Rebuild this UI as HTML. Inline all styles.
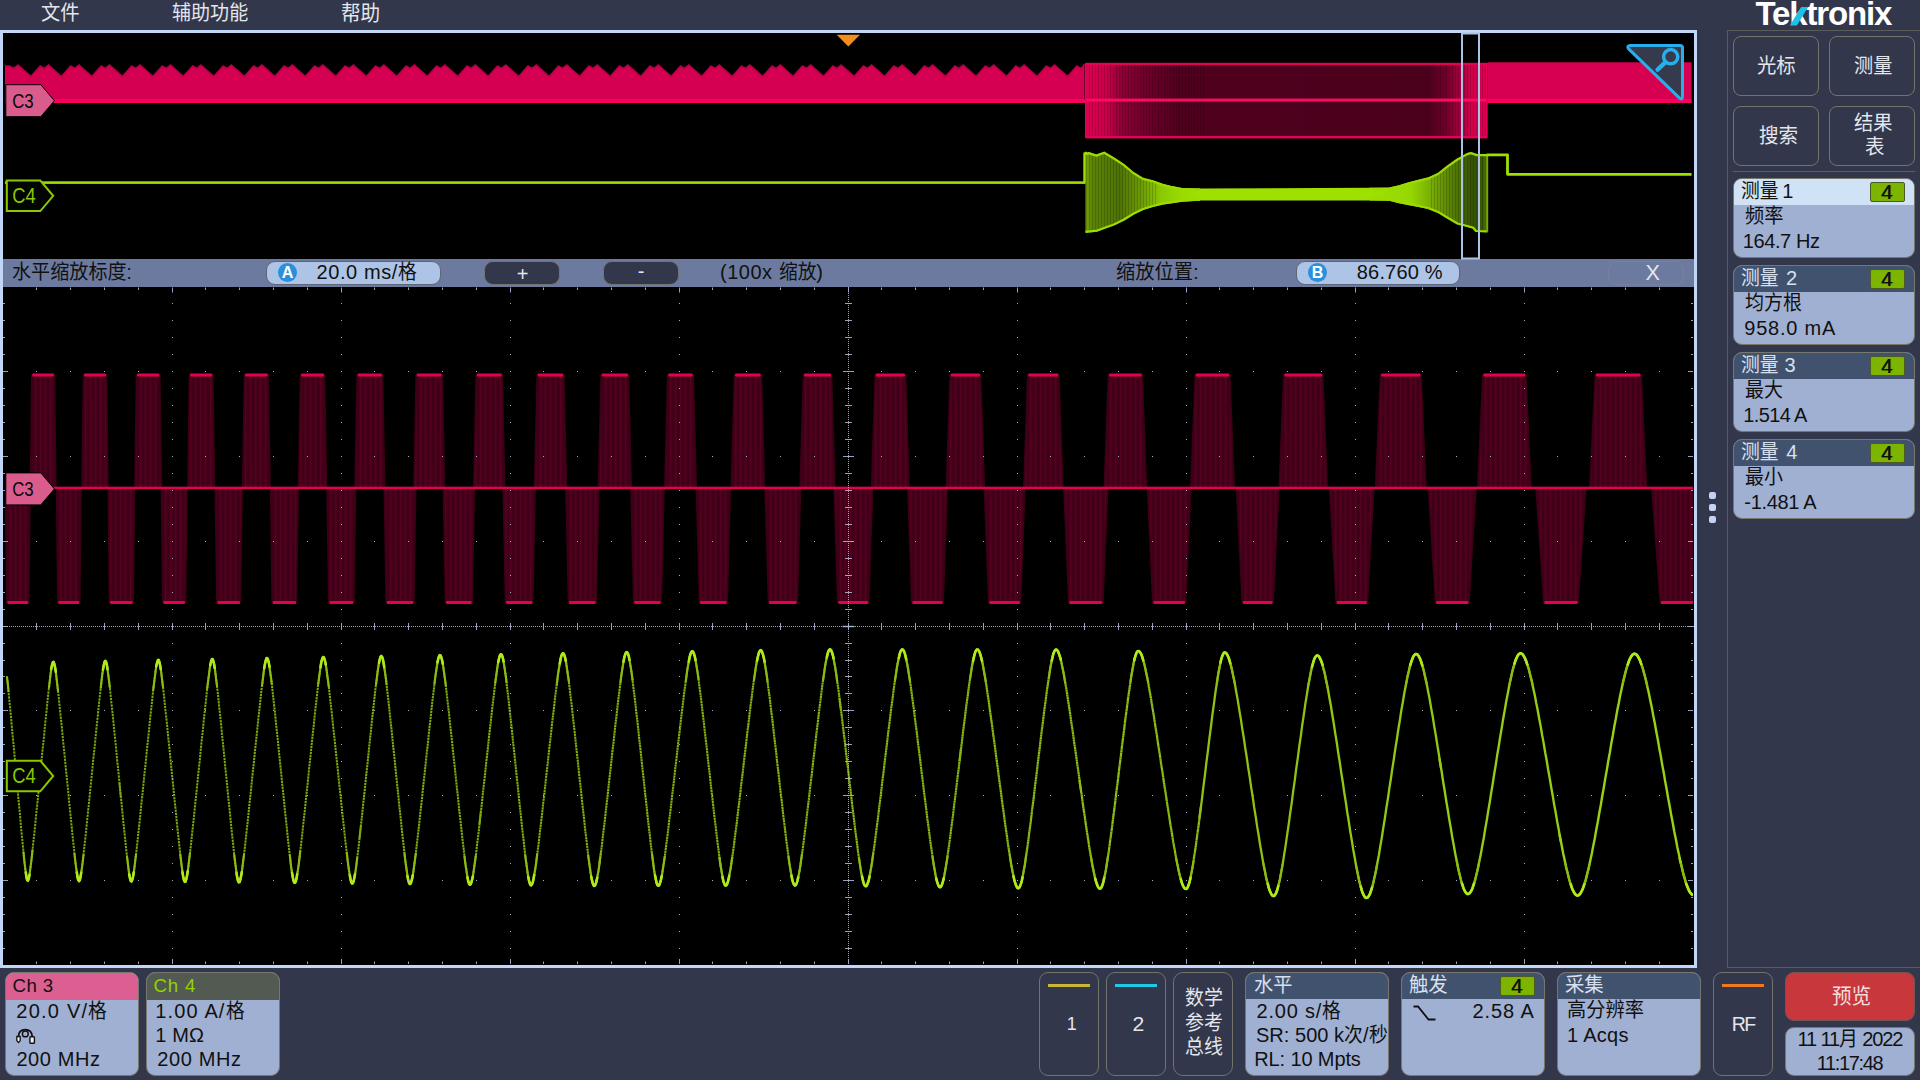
<!DOCTYPE html><html lang="zh"><head><meta charset="utf-8"><title>Tektronix</title><style>
*{box-sizing:border-box;margin:0;padding:0}
html,body{width:1920px;height:1080px;overflow:hidden;background:#32374b;}
body{position:relative;font-family:"Liberation Sans","Noto Sans CJK SC",sans-serif;font-size:20px;color:#111;}
.a{position:absolute;white-space:nowrap;}
.t{position:absolute;white-space:nowrap;line-height:24px;height:24px;}
.w{color:#e4e6ec}
.c{display:inline-block;font-size:1em;transform:scaleX(0.940);transform-origin:0 50%;letter-spacing:0;}
.btn{position:absolute;border:1px solid #73736e;border-radius:8px;background:#32374b;color:#e4e6ec;text-align:center;}
.badge{position:absolute;border:1px solid #77776e;border-radius:9px;background:#a0b0d2;overflow:hidden;}
.badge .h{position:absolute;left:0;top:0;right:0;background:#41526e;}
.chip{position:absolute;background:#7db400;border:1px solid #4c5a2a;border-radius:2px;color:#111;text-align:center;font-weight:bold;}
svg{position:absolute;left:0;top:0;}
</style></head><body>
<div class="t" style="top:1px;left:40.5px;font-size:20.56px;color:#e4e6ec;"><span class="c" style="margin-right:-0.12em">文件</span></div>
<div class="t" style="top:1px;left:171.5px;font-size:20.27px;color:#e4e6ec;"><span class="c" style="margin-right:-0.24em">辅助功能</span></div>
<div class="t" style="top:1px;left:340.5px;font-size:20.86px;color:#e4e6ec;"><span class="c" style="margin-right:-0.12em">帮助</span></div>
<div class="a" style="left:1755.5px;top:-5.2px;font-size:33px;line-height:38px;font-weight:bold;color:#fff;letter-spacing:-1.15px;">Tektronix</div>
<svg width="40" height="30" style="left:1780px;top:0" viewBox="1780 0 40 30"><polygon points="1801.2,7 1808.2,7 1796.9,25.4 1789.9,25.4" fill="#1ec0e6"/></svg>
<div class="a" style="left:0;top:30px;width:1697px;height:938px;background:#c2d6f7;"></div>
<div class="a" style="left:3px;top:33px;width:1691px;height:226px;background:#000;"></div>
<div class="a" style="left:3px;top:259px;width:1691px;height:28px;background:#6c7aa0;"></div>
<div class="a" style="left:3px;top:287px;width:1691px;height:678px;background:#000;"></div>
<svg width="1920" height="1080" viewBox="0 0 1920 1080"><polygon fill="#d60052" points="5.0,102.5 5.0,66.0 9.7,66.0 13.8,68.4 18.0,65.0 30.8,76.4 40.2,66.0 44.3,68.4 48.5,65.0 61.3,76.4 70.7,66.0 74.8,68.4 79.0,65.0 91.8,76.4 101.2,66.0 105.3,68.4 109.5,65.0 122.3,76.4 131.7,66.0 135.8,68.4 140.0,65.0 152.8,76.4 162.2,66.0 166.3,68.4 170.5,65.0 183.2,76.4 192.7,66.0 196.8,68.4 200.9,65.0 213.7,76.4 223.1,66.0 227.2,68.4 231.4,65.0 244.2,76.4 253.6,66.0 257.7,68.4 261.9,65.0 274.7,76.4 284.1,66.0 288.2,68.4 292.4,65.0 305.2,76.4 314.6,66.0 318.7,68.4 322.9,65.0 335.7,76.4 345.1,66.0 349.2,68.4 353.4,65.0 366.2,76.4 375.6,66.0 379.7,68.4 383.9,65.0 396.7,76.4 406.1,66.0 410.2,68.4 414.4,65.0 427.2,76.4 436.6,66.0 440.7,68.4 444.9,65.0 457.7,76.4 467.1,66.0 471.2,68.4 475.4,65.0 488.1,76.4 497.5,66.0 501.6,68.4 505.8,65.0 518.6,76.4 528.0,66.0 532.1,68.4 536.3,65.0 549.1,76.4 558.5,66.0 562.6,68.4 566.8,65.0 579.6,76.4 589.0,66.0 593.1,68.4 597.3,65.0 610.1,76.4 619.5,66.0 623.6,68.4 627.8,65.0 640.6,76.4 650.0,66.0 654.1,68.4 658.3,65.0 671.1,76.4 680.5,66.0 684.6,68.4 688.8,65.0 701.6,76.4 711.0,66.0 715.1,68.4 719.3,65.0 732.1,76.4 741.5,66.0 745.6,68.4 749.8,65.0 762.6,76.4 772.0,66.0 776.1,68.4 780.3,65.0 793.0,76.4 802.4,66.0 806.5,68.4 810.8,65.0 823.5,76.4 832.9,66.0 837.0,68.4 841.2,65.0 854.0,76.4 863.4,66.0 867.5,68.4 871.7,65.0 884.5,76.4 893.9,66.0 898.0,68.4 902.2,65.0 915.0,76.4 924.4,66.0 928.5,68.4 932.7,65.0 945.5,76.4 954.9,66.0 959.0,68.4 963.2,65.0 976.0,76.4 985.4,66.0 989.5,68.4 993.7,65.0 1006.5,76.4 1015.9,66.0 1020.0,68.4 1024.2,65.0 1037.0,76.4 1046.4,66.0 1050.5,68.4 1054.7,65.0 1067.5,76.4 1076.9,66.0 1081.0,68.4 1084.5,64.0 1084.5,102.5"/>
<polyline fill="none" stroke="#b40046" stroke-width="1.5" points="5.0,66.0 9.7,66.0 13.8,68.4 18.0,65.0 30.8,76.4 40.2,66.0 44.3,68.4 48.5,65.0 61.3,76.4 70.7,66.0 74.8,68.4 79.0,65.0 91.8,76.4 101.2,66.0 105.3,68.4 109.5,65.0 122.3,76.4 131.7,66.0 135.8,68.4 140.0,65.0 152.8,76.4 162.2,66.0 166.3,68.4 170.5,65.0 183.2,76.4 192.7,66.0 196.8,68.4 200.9,65.0 213.7,76.4 223.1,66.0 227.2,68.4 231.4,65.0 244.2,76.4 253.6,66.0 257.7,68.4 261.9,65.0 274.7,76.4 284.1,66.0 288.2,68.4 292.4,65.0 305.2,76.4 314.6,66.0 318.7,68.4 322.9,65.0 335.7,76.4 345.1,66.0 349.2,68.4 353.4,65.0 366.2,76.4 375.6,66.0 379.7,68.4 383.9,65.0 396.7,76.4 406.1,66.0 410.2,68.4 414.4,65.0 427.2,76.4 436.6,66.0 440.7,68.4 444.9,65.0 457.7,76.4 467.1,66.0 471.2,68.4 475.4,65.0 488.1,76.4 497.5,66.0 501.6,68.4 505.8,65.0 518.6,76.4 528.0,66.0 532.1,68.4 536.3,65.0 549.1,76.4 558.5,66.0 562.6,68.4 566.8,65.0 579.6,76.4 589.0,66.0 593.1,68.4 597.3,65.0 610.1,76.4 619.5,66.0 623.6,68.4 627.8,65.0 640.6,76.4 650.0,66.0 654.1,68.4 658.3,65.0 671.1,76.4 680.5,66.0 684.6,68.4 688.8,65.0 701.6,76.4 711.0,66.0 715.1,68.4 719.3,65.0 732.1,76.4 741.5,66.0 745.6,68.4 749.8,65.0 762.6,76.4 772.0,66.0 776.1,68.4 780.3,65.0 793.0,76.4 802.4,66.0 806.5,68.4 810.8,65.0 823.5,76.4 832.9,66.0 837.0,68.4 841.2,65.0 854.0,76.4 863.4,66.0 867.5,68.4 871.7,65.0 884.5,76.4 893.9,66.0 898.0,68.4 902.2,65.0 915.0,76.4 924.4,66.0 928.5,68.4 932.7,65.0 945.5,76.4 954.9,66.0 959.0,68.4 963.2,65.0 976.0,76.4 985.4,66.0 989.5,68.4 993.7,65.0 1006.5,76.4 1015.9,66.0 1020.0,68.4 1024.2,65.0 1037.0,76.4 1046.4,66.0 1050.5,68.4 1054.7,65.0 1067.5,76.4 1076.9,66.0 1081.0,68.4 1084.5,64.0"/>
<rect x="5" y="99" width="1080" height="4" fill="#fb005c"/>
<defs>
<linearGradient id="gb" x1="0" x2="1" y1="0" y2="0">
<stop offset="0" stop-color="#e00052"/><stop offset="0.055" stop-color="#c40048"/><stop offset="0.09" stop-color="#8c0036"/><stop offset="0.16" stop-color="#6a0028"/>
<stop offset="0.235" stop-color="#50001e"/><stop offset="0.855" stop-color="#4b001c"/><stop offset="0.90" stop-color="#72002b"/><stop offset="0.935" stop-color="#a8003e"/><stop offset="0.96" stop-color="#d0004c"/><stop offset="1" stop-color="#dc0050"/>
</linearGradient>
<linearGradient id="gg" gradientUnits="userSpaceOnUse" x1="1085" x2="1200" y1="0" y2="0">
<stop offset="0" stop-color="#7aa808"/><stop offset="0.06" stop-color="#5c8406"/><stop offset="0.3" stop-color="#4e7205"/><stop offset="0.5" stop-color="#6e9e05"/><stop offset="0.66" stop-color="#8cc804"/><stop offset="0.85" stop-color="#9bdc00"/><stop offset="1" stop-color="#9ee000"/>
</linearGradient>
<linearGradient id="gg2" gradientUnits="userSpaceOnUse" x1="1370" x2="1488" y1="0" y2="0">
<stop offset="0" stop-color="#9ee000"/><stop offset="0.34" stop-color="#96d802"/><stop offset="0.58" stop-color="#6e9e05"/><stop offset="0.74" stop-color="#4e7405"/><stop offset="0.86" stop-color="#385205"/><stop offset="0.96" stop-color="#3c5805"/><stop offset="1" stop-color="#6a9608"/>
</linearGradient>
<pattern id="stri" width="5" height="8" patternUnits="userSpaceOnUse"><rect width="5" height="8" fill="#47001a"/><rect x="0" width="1.2" height="8" fill="#560021"/><rect x="2.6" width="1" height="8" fill="#380013"/></pattern>
<pattern id="stri2" width="3" height="8" patternUnits="userSpaceOnUse"><rect x="0" width="1" height="8" fill="#000" opacity="0.16"/></pattern>
</defs>
<rect x="1086" y="64" width="401" height="73" fill="url(#gb)"/>
<rect x="1086" y="64" width="120" height="73" fill="url(#stri2)"/>
<rect x="1440" y="64" width="47" height="73" fill="url(#stri2)"/>
<rect x="1086" y="62.8" width="401" height="2.2" fill="#e80058"/>
<rect x="1086" y="136" width="401" height="2.4" fill="#e80058"/>
<rect x="1085" y="98.6" width="403" height="3" fill="#ff0a62"/>
<rect x="1085" y="63" width="1.6" height="75" fill="#e80058"/>
<rect x="1486" y="63" width="1.6" height="75" fill="#e80058"/>
<rect x="1487.5" y="62.3" width="204" height="40.5" fill="#d70050"/>
<rect x="1487.5" y="99" width="204" height="4" fill="#fb005c"/>
<rect x="5" y="181.3" width="1080" height="2.6" fill="#9ee000"/>
<polygon fill="url(#gg)" points="1085.5,153.5 1088.6,152.1 1096.4,154.6 1104.2,151.7 1113.9,157.5 1123.6,163.8 1133.3,172.0 1143.0,177.9 1152.7,180.3 1162.5,183.7 1172.2,186.2 1181.9,188.1 1200.0,188.6 1200.0,200.6 1182.0,201.7 1172.0,203.2 1162.5,204.6 1152.7,207.0 1143.0,210.0 1133.3,214.8 1123.6,220.7 1113.9,225.5 1104.0,229.0 1097.4,231.6 1085.5,232.8"/>
<polygon fill="#9ee000" points="1199.0,188.6 1371.0,187.8 1371.0,200.4 1199.0,200.6"/>
<polygon fill="url(#gg2)" points="1370.0,187.8 1389.4,187.6 1399.2,185.2 1408.9,182.3 1418.6,179.8 1428.3,177.4 1438.0,173.0 1447.7,165.3 1457.5,158.5 1467.2,153.1 1471.0,152.1 1476.9,154.1 1487.5,154.1 1487.5,232.3 1476.0,232.0 1473.0,228.6 1467.2,227.0 1457.5,224.5 1447.7,218.7 1438.0,212.9 1428.3,209.0 1418.6,207.0 1408.9,205.1 1399.2,203.2 1389.4,200.7 1370.0,200.4"/>
<rect x="1086" y="150" width="70" height="85" fill="url(#stri2)"/>
<rect x="1430" y="150" width="58" height="85" fill="url(#stri2)"/>
<polyline fill="none" stroke="#9cdc00" stroke-width="2.2" stroke-linejoin="round" points="1085.5,154.5 1088.6,153.1 1096.4,155.6 1104.2,152.7 1113.9,158.5 1123.6,164.8 1133.3,173.0 1143.0,178.9 1152.7,181.3 1162.5,184.7 1172.2,187.2 1181.9,189.1 1200.0,189.6"/>
<polyline fill="none" stroke="#9cdc00" stroke-width="2.2" stroke-linejoin="round" points="1085.5,231.8 1097.4,230.6 1104.0,228.0 1113.9,224.5 1123.6,219.7 1133.3,213.8 1143.0,209.0 1152.7,206.0 1162.5,203.6 1172.0,202.2 1182.0,200.7 1200.0,199.6"/>
<polyline fill="none" stroke="#9cdc00" stroke-width="2.2" stroke-linejoin="round" points="1370.0,188.8 1389.4,188.6 1399.2,186.2 1408.9,183.3 1418.6,180.8 1428.3,178.4 1438.0,174.0 1447.7,166.3 1457.5,159.5 1467.2,154.1 1471.0,153.1 1476.9,155.1 1487.5,155.1"/>
<polyline fill="none" stroke="#9cdc00" stroke-width="2.2" stroke-linejoin="round" points="1370.0,199.4 1389.4,199.7 1399.2,202.2 1408.9,204.1 1418.6,206.0 1428.3,208.0 1438.0,211.9 1447.7,217.7 1457.5,223.5 1467.2,226.0 1473.0,227.6 1476.0,231.0 1487.5,231.3"/>
<polyline fill="none" stroke="#9ee000" stroke-width="2.4" points="1084.5,183.5 1084.5,153.5 1087,152.5"/>
<line x1="1487.3" y1="232" x2="1487.3" y2="156" stroke="#74a606" stroke-width="1.8"/>
<polyline fill="none" stroke="#9ee000" stroke-width="2.8" stroke-linejoin="round" points="1486.5,154.8 1507.5,154.8 1507.5,174.3 1691.5,174.3"/>
<rect x="1462" y="33.5" width="17" height="225" fill="none" stroke="#a9c4e2" stroke-width="2"/>
<path d="M1630.5,45.6 L1680,45.6 Q1682.5,45.6 1682.5,48.1 L1682.5,96.3 Q1682.5,100.6 1679.3,97.9 L1628.9,49.2 Q1626,45.6 1630.5,45.6 Z" fill="#353a4c" stroke="#28afeb" stroke-width="3" stroke-linejoin="round"/>
<circle cx="1670.7" cy="56.7" r="7.1" fill="none" stroke="#28afeb" stroke-width="3.5"/>
<line x1="1665.2" y1="62.4" x2="1657.6" y2="69.7" stroke="#28afeb" stroke-width="4.4" stroke-linecap="round"/>
<polygon points="836.7,34.8 860,34.8 848.3,46.6" fill="#f78c1e"/>
<polygon points="5.8,84.7 40.8,84.7 54.4,100.7 40.8,116.7 5.8,116.7" fill="#da5c8c" stroke="#000" stroke-width="1"/>
<text x="12.2" y="107.9" font-size="21" textLength="21.5" lengthAdjust="spacingAndGlyphs" fill="#0a0a0a" font-family="Liberation Sans,sans-serif">C3</text>
<polygon points="6.8,180.5 40.3,180.5 53.2,195.8 40.3,211.10000000000002 6.8,211.10000000000002" fill="#020502" stroke="#8cc800" stroke-width="2"/>
<text x="12.2" y="203.10000000000002" font-size="21.5" textLength="23.5" lengthAdjust="spacingAndGlyphs" fill="#8cc800" font-family="Liberation Sans,sans-serif">C4</text>
<clipPath id="cp"><rect x="3" y="287" width="1690" height="678"/></clipPath>
<g clip-path="url(#cp)">
<polygon points="31.8,375 54.5,375 55.8,488 30.5,488" fill="url(#stri)" stroke="#3a0015" stroke-width="1.6" stroke-linejoin="round"/>
<rect x="32.3" y="373.6" width="21.7" height="3" rx="1" fill="#e30053"/>
<polygon points="83.5,375 106.5,375 108.0,488 82.0,488" fill="url(#stri)" stroke="#3a0015" stroke-width="1.6" stroke-linejoin="round"/>
<rect x="84.0" y="373.6" width="22.0" height="3" rx="1" fill="#e30053"/>
<polygon points="136.5,375 159.8,375 161.4,488 134.9,488" fill="url(#stri)" stroke="#3a0015" stroke-width="1.6" stroke-linejoin="round"/>
<rect x="137.0" y="373.6" width="22.3" height="3" rx="1" fill="#e30053"/>
<polygon points="189.5,375 212.8,375 214.5,488 187.8,488" fill="url(#stri)" stroke="#3a0015" stroke-width="1.6" stroke-linejoin="round"/>
<rect x="190.0" y="373.6" width="22.3" height="3" rx="1" fill="#e30053"/>
<polygon points="244.5,375 268.2,375 270.1,488 242.6,488" fill="url(#stri)" stroke="#3a0015" stroke-width="1.6" stroke-linejoin="round"/>
<rect x="245.0" y="373.6" width="22.7" height="3" rx="1" fill="#e30053"/>
<polygon points="300.5,375 324.5,375 326.5,488 298.5,488" fill="url(#stri)" stroke="#3a0015" stroke-width="1.6" stroke-linejoin="round"/>
<rect x="301.0" y="373.6" width="23.0" height="3" rx="1" fill="#e30053"/>
<polygon points="357.2,375 382.5,375 384.7,488 355.0,488" fill="url(#stri)" stroke="#3a0015" stroke-width="1.6" stroke-linejoin="round"/>
<rect x="357.7" y="373.6" width="24.3" height="3" rx="1" fill="#e30053"/>
<polygon points="416.2,375 442.2,375 444.5,488 413.9,488" fill="url(#stri)" stroke="#3a0015" stroke-width="1.6" stroke-linejoin="round"/>
<rect x="416.7" y="373.6" width="25.0" height="3" rx="1" fill="#e30053"/>
<polygon points="476.2,375 502.2,375 504.7,488 473.7,488" fill="url(#stri)" stroke="#3a0015" stroke-width="1.6" stroke-linejoin="round"/>
<rect x="476.7" y="373.6" width="25.0" height="3" rx="1" fill="#e30053"/>
<polygon points="537.2,375 563.8,375 566.5,488 534.5,488" fill="url(#stri)" stroke="#3a0015" stroke-width="1.6" stroke-linejoin="round"/>
<rect x="537.7" y="373.6" width="25.6" height="3" rx="1" fill="#e30053"/>
<polygon points="601.2,375 628.5,375 631.3,488 598.4,488" fill="url(#stri)" stroke="#3a0015" stroke-width="1.6" stroke-linejoin="round"/>
<rect x="601.7" y="373.6" width="26.3" height="3" rx="1" fill="#e30053"/>
<polygon points="667.8,375 693.2,375 696.2,488 664.8,488" fill="url(#stri)" stroke="#3a0015" stroke-width="1.6" stroke-linejoin="round"/>
<rect x="668.3" y="373.6" width="24.4" height="3" rx="1" fill="#e30053"/>
<polygon points="734.5,375 761.2,375 764.4,488 731.3,488" fill="url(#stri)" stroke="#3a0015" stroke-width="1.6" stroke-linejoin="round"/>
<rect x="735.0" y="373.6" width="25.7" height="3" rx="1" fill="#e30053"/>
<polygon points="803.5,375 831.5,375 834.9,488 800.1,488" fill="url(#stri)" stroke="#3a0015" stroke-width="1.6" stroke-linejoin="round"/>
<rect x="804.0" y="373.6" width="27.0" height="3" rx="1" fill="#e30053"/>
<polygon points="875.2,375 905.5,375 909.1,488 871.6,488" fill="url(#stri)" stroke="#3a0015" stroke-width="1.6" stroke-linejoin="round"/>
<rect x="875.7" y="373.6" width="29.3" height="3" rx="1" fill="#e30053"/>
<polygon points="950.2,375 980.5,375 984.3,488 946.4,488" fill="url(#stri)" stroke="#3a0015" stroke-width="1.6" stroke-linejoin="round"/>
<rect x="950.7" y="373.6" width="29.3" height="3" rx="1" fill="#e30053"/>
<polygon points="1027.8,375 1058.8,375 1062.8,488 1023.8,488" fill="url(#stri)" stroke="#3a0015" stroke-width="1.6" stroke-linejoin="round"/>
<rect x="1028.3" y="373.6" width="30.0" height="3" rx="1" fill="#e30053"/>
<polygon points="1108.5,375 1142.2,375 1146.4,488 1104.3,488" fill="url(#stri)" stroke="#3a0015" stroke-width="1.6" stroke-linejoin="round"/>
<rect x="1109.0" y="373.6" width="32.7" height="3" rx="1" fill="#e30053"/>
<polygon points="1195.2,375 1229.8,375 1234.2,488 1190.8,488" fill="url(#stri)" stroke="#3a0015" stroke-width="1.6" stroke-linejoin="round"/>
<rect x="1195.7" y="373.6" width="33.6" height="3" rx="1" fill="#e30053"/>
<polygon points="1283.8,375 1322.7,375 1327.3,488 1279.2,488" fill="url(#stri)" stroke="#3a0015" stroke-width="1.6" stroke-linejoin="round"/>
<rect x="1284.3" y="373.6" width="37.9" height="3" rx="1" fill="#e30053"/>
<polygon points="1380.5,375 1421.0,375 1425.9,488 1375.6,488" fill="url(#stri)" stroke="#3a0015" stroke-width="1.6" stroke-linejoin="round"/>
<rect x="1381.0" y="373.6" width="39.5" height="3" rx="1" fill="#e30053"/>
<polygon points="1482.9,375 1525.8,375 1531.0,488 1477.7,488" fill="url(#stri)" stroke="#3a0015" stroke-width="1.6" stroke-linejoin="round"/>
<rect x="1483.4" y="373.6" width="41.9" height="3" rx="1" fill="#e30053"/>
<polygon points="1595.3,375 1641.0,375 1646.5,488 1589.8,488" fill="url(#stri)" stroke="#3a0015" stroke-width="1.6" stroke-linejoin="round"/>
<rect x="1595.8" y="373.6" width="44.7" height="3" rx="1" fill="#e30053"/>
<polygon points="5.6,488 30.0,488 28.8,602.5 6.8,602.5" fill="url(#stri)" stroke="#3a0015" stroke-width="1.6" stroke-linejoin="round"/>
<rect x="7.3" y="600.9" width="21.0" height="3" rx="1" fill="#e30053"/>
<polygon points="56.6,488 81.0,488 79.8,602.5 57.8,602.5" fill="url(#stri)" stroke="#3a0015" stroke-width="1.6" stroke-linejoin="round"/>
<rect x="58.3" y="600.9" width="21.0" height="3" rx="1" fill="#e30053"/>
<polygon points="108.2,488 134.5,488 133.2,602.5 109.5,602.5" fill="url(#stri)" stroke="#3a0015" stroke-width="1.6" stroke-linejoin="round"/>
<rect x="110.0" y="600.9" width="22.7" height="3" rx="1" fill="#e30053"/>
<polygon points="161.4,488 186.9,488 185.5,602.5 162.8,602.5" fill="url(#stri)" stroke="#3a0015" stroke-width="1.6" stroke-linejoin="round"/>
<rect x="163.3" y="600.9" width="21.7" height="3" rx="1" fill="#e30053"/>
<polygon points="215.3,488 242.0,488 240.5,602.5 216.8,602.5" fill="url(#stri)" stroke="#3a0015" stroke-width="1.6" stroke-linejoin="round"/>
<rect x="217.3" y="600.9" width="22.7" height="3" rx="1" fill="#e30053"/>
<polygon points="270.6,488 298.1,488 296.5,602.5 272.2,602.5" fill="url(#stri)" stroke="#3a0015" stroke-width="1.6" stroke-linejoin="round"/>
<rect x="272.7" y="600.9" width="23.3" height="3" rx="1" fill="#e30053"/>
<polygon points="327.0,488 355.6,488 353.8,602.5 328.8,602.5" fill="url(#stri)" stroke="#3a0015" stroke-width="1.6" stroke-linejoin="round"/>
<rect x="329.3" y="600.9" width="24.0" height="3" rx="1" fill="#e30053"/>
<polygon points="384.3,488 415.7,488 413.8,602.5 386.2,602.5" fill="url(#stri)" stroke="#3a0015" stroke-width="1.6" stroke-linejoin="round"/>
<rect x="386.7" y="600.9" width="26.6" height="3" rx="1" fill="#e30053"/>
<polygon points="443.4,488 474.3,488 472.2,602.5 445.5,602.5" fill="url(#stri)" stroke="#3a0015" stroke-width="1.6" stroke-linejoin="round"/>
<rect x="446.0" y="600.9" width="25.7" height="3" rx="1" fill="#e30053"/>
<polygon points="503.2,488 535.1,488 532.8,602.5 505.5,602.5" fill="url(#stri)" stroke="#3a0015" stroke-width="1.6" stroke-linejoin="round"/>
<rect x="506.0" y="600.9" width="26.3" height="3" rx="1" fill="#e30053"/>
<polygon points="565.9,488 598.8,488 596.2,602.5 568.5,602.5" fill="url(#stri)" stroke="#3a0015" stroke-width="1.6" stroke-linejoin="round"/>
<rect x="569.0" y="600.9" width="26.7" height="3" rx="1" fill="#e30053"/>
<polygon points="631.0,488 664.0,488 661.2,602.5 633.8,602.5" fill="url(#stri)" stroke="#3a0015" stroke-width="1.6" stroke-linejoin="round"/>
<rect x="634.3" y="600.9" width="26.4" height="3" rx="1" fill="#e30053"/>
<polygon points="696.4,488 730.3,488 727.2,602.5 699.5,602.5" fill="url(#stri)" stroke="#3a0015" stroke-width="1.6" stroke-linejoin="round"/>
<rect x="700.0" y="600.9" width="26.7" height="3" rx="1" fill="#e30053"/>
<polygon points="765.1,488 800.6,488 797.2,602.5 768.5,602.5" fill="url(#stri)" stroke="#3a0015" stroke-width="1.6" stroke-linejoin="round"/>
<rect x="769.0" y="600.9" width="27.7" height="3" rx="1" fill="#e30053"/>
<polygon points="834.1,488 872.5,488 868.8,602.5 837.8,602.5" fill="url(#stri)" stroke="#3a0015" stroke-width="1.6" stroke-linejoin="round"/>
<rect x="838.3" y="600.9" width="30.0" height="3" rx="1" fill="#e30053"/>
<polygon points="907.8,488 947.2,488 943.2,602.5 911.8,602.5" fill="url(#stri)" stroke="#3a0015" stroke-width="1.6" stroke-linejoin="round"/>
<rect x="912.3" y="600.9" width="30.4" height="3" rx="1" fill="#e30053"/>
<polygon points="984.4,488 1024.9,488 1020.5,602.5 988.8,602.5" fill="url(#stri)" stroke="#3a0015" stroke-width="1.6" stroke-linejoin="round"/>
<rect x="989.3" y="600.9" width="30.7" height="3" rx="1" fill="#e30053"/>
<polygon points="1063.9,488 1107.7,488 1102.8,602.5 1068.8,602.5" fill="url(#stri)" stroke="#3a0015" stroke-width="1.6" stroke-linejoin="round"/>
<rect x="1069.3" y="600.9" width="33.0" height="3" rx="1" fill="#e30053"/>
<polygon points="1147.5,488 1190.8,488 1185.5,602.5 1152.8,602.5" fill="url(#stri)" stroke="#3a0015" stroke-width="1.6" stroke-linejoin="round"/>
<rect x="1153.3" y="600.9" width="31.7" height="3" rx="1" fill="#e30053"/>
<polygon points="1236.5,488 1278.9,488 1273.1,602.5 1242.3,602.5" fill="url(#stri)" stroke="#3a0015" stroke-width="1.6" stroke-linejoin="round"/>
<rect x="1242.8" y="600.9" width="29.8" height="3" rx="1" fill="#e30053"/>
<polygon points="1329.7,488 1373.8,488 1367.4,602.5 1336.1,602.5" fill="url(#stri)" stroke="#3a0015" stroke-width="1.6" stroke-linejoin="round"/>
<rect x="1336.6" y="600.9" width="30.3" height="3" rx="1" fill="#e30053"/>
<polygon points="1428.5,488 1476.0,488 1469.0,602.5 1435.5,602.5" fill="url(#stri)" stroke="#3a0015" stroke-width="1.6" stroke-linejoin="round"/>
<rect x="1436.0" y="600.9" width="32.5" height="3" rx="1" fill="#e30053"/>
<polygon points="1536.1,488 1585.8,488 1578.1,602.5 1543.8,602.5" fill="url(#stri)" stroke="#3a0015" stroke-width="1.6" stroke-linejoin="round"/>
<rect x="1544.3" y="600.9" width="33.3" height="3" rx="1" fill="#e30053"/>
<polygon points="1651.8,488 1702.5,488 1694.0,602.5 1660.3,602.5" fill="url(#stri)" stroke="#3a0015" stroke-width="1.6" stroke-linejoin="round"/>
<rect x="1660.8" y="600.9" width="32.7" height="3" rx="1" fill="#e30053"/>
<rect x="54" y="486.7" width="1640" height="2.4" fill="#e60052"/>
<polyline fill="none" stroke="#7aa60c" stroke-width="2.00" stroke-dasharray="2.3 0.95" stroke-linejoin="round" points="7.0,677.0 7.8,683.9 8.5,691.2 9.2,698.8 10.0,706.6 10.8,714.6 11.5,722.6 12.2,730.7 13.0,738.9 13.8,747.1 14.5,755.3 15.2,763.6 16.0,771.8 16.8,780.1 17.5,788.3 18.2,796.5 19.0,804.7 19.8,812.9 20.5,821.0 21.2,829.1 22.0,837.0 22.8,844.8 23.5,852.4 24.2,859.7 25.0,866.5 25.8,872.6 26.5,877.4 27.2,880.2 28.0,880.5 28.8,878.5 29.5,874.7 30.2,869.6 31.0,863.7 31.8,857.2 32.5,850.4 33.2,843.4 34.0,836.2 34.8,828.9 35.5,821.6 36.2,814.1 37.0,806.6 37.8,799.1 38.5,791.5 39.2,783.9 40.0,776.4 40.8,768.8 41.5,761.2 42.2,753.6 43.0,746.0 43.8,738.5 44.5,730.9 45.2,723.4 46.0,716.0 46.8,708.7 47.5,701.4 48.2,694.3 49.0,687.4 49.8,680.8 50.5,674.7 51.2,669.3 52.0,665.0 52.8,662.3 53.5,661.8 54.2,663.5 55.0,667.0 55.8,671.9 56.5,677.7 57.2,684.1 58.0,690.8 58.8,697.8 59.5,704.9 60.2,712.2 61.0,719.5 61.8,727.0 62.5,734.4 63.2,742.0 64.0,749.5 64.8,757.1 65.5,764.7 66.2,772.3 67.0,779.9 67.8,787.4 68.5,795.0 69.2,802.6 70.0,810.1 70.8,817.6 71.5,825.0 72.2,832.4 73.0,839.7 73.8,846.8 74.5,853.8 75.2,860.4 76.0,866.7 76.8,872.3 77.5,876.9 78.2,880.0 79.0,881.1 79.8,880.1 80.5,877.1 81.2,872.7 82.0,867.3 82.8,861.2 83.5,854.8 84.2,848.0 85.0,841.1 85.8,834.0 86.5,826.8 87.2,819.5 88.0,812.2 88.8,804.8 89.5,797.4 90.2,790.0 91.0,782.6 91.8,775.1 92.5,767.6 93.2,760.2 94.0,752.7 94.8,745.3 95.5,737.9 96.2,730.5 97.0,723.1 97.8,715.8 98.5,708.6 99.2,701.5 100.0,694.5 100.8,687.7 101.5,681.2 102.2,675.1 103.0,669.6 103.8,665.1 104.5,662.0 105.2,660.8 106.0,661.7 106.8,664.6 107.5,669.0 108.2,674.4 109.0,680.5 109.8,687.1 110.5,693.9 111.2,701.0 112.0,708.1 112.8,715.4 113.5,722.8 114.2,730.3 115.0,737.8 115.8,745.3 116.5,752.8 117.2,760.4 118.0,768.0 118.8,775.6 119.5,783.1 120.2,790.7 121.0,798.3"/>
<polyline fill="none" stroke="#7ba80c" stroke-width="2.02" stroke-dasharray="2.3 0.86" stroke-linejoin="round" points="119.5,783.1 120.2,790.7 121.0,798.3 121.8,805.8 122.5,813.3 123.2,820.8 124.0,828.2 124.8,835.5 125.5,842.7 126.2,849.7 127.0,856.5 127.8,863.0 128.5,869.0 129.2,874.3 130.0,878.4 130.8,881.0 131.5,881.5 132.2,880.0 133.0,876.8 133.8,872.3 134.5,866.9 135.2,861.0 136.0,854.6 136.8,848.0 137.5,841.2 138.2,834.2 139.0,827.1 139.8,820.0 140.5,812.8 141.2,805.5 142.0,798.3 142.8,790.9 143.5,783.6 144.2,776.3 145.0,768.9 145.8,761.6 146.5,754.2 147.2,746.9 148.0,739.6 148.8,732.3 149.5,725.1 150.2,717.9 151.0,710.7 151.8,703.7 152.5,696.7 153.2,690.0 154.0,683.5 154.8,677.3 155.5,671.6 156.2,666.6 157.0,662.8 157.8,660.4 158.5,659.9 159.2,661.4 160.0,664.7 160.8,669.2 161.5,674.7 162.2,680.7 163.0,687.2 163.8,693.9 164.5,700.8 165.2,707.9 166.0,715.1 166.8,722.4 167.5,729.7 168.2,737.0 169.0,744.4 169.8,751.9 170.5,759.3 171.2,766.8 172.0,774.2 172.8,781.7 173.5,789.2 174.2,796.6 175.0,804.0 175.8,811.4 176.5,818.8 177.2,826.1 178.0,833.3 178.8,840.4 179.5,847.4 180.2,854.2 181.0,860.7 181.8,866.8 182.5,872.3 183.2,876.9 184.0,880.3 184.8,881.9 185.5,881.6 186.2,879.4 187.0,875.8 187.8,871.0 188.5,865.5 189.2,859.4 190.0,853.0 190.8,846.4 191.5,839.5 192.2,832.5 193.0,825.5 193.8,818.3 194.5,811.1 195.2,803.8 196.0,796.6 196.8,789.2 197.5,781.9 198.2,774.6 199.0,767.2 199.8,759.9 200.5,752.5 201.2,745.2 202.0,737.9 202.8,730.6 203.5,723.4 204.2,716.2 205.0,709.1 205.8,702.0 206.5,695.1 207.2,688.4 208.0,682.0 208.8,675.9 209.5,670.3 210.2,665.4 211.0,661.7 211.8,659.4 212.5,659.0 213.2,660.5 214.0,663.7 214.8,668.2 215.5,673.6 216.2,679.6 217.0,686.1 217.8,692.9 218.5,699.9 219.2,707.0 220.0,714.2 220.8,721.6 221.5,729.0 222.2,736.4 223.0,743.9 223.8,751.4 224.5,758.9 225.2,766.5 226.0,774.0 226.8,781.6 227.5,789.1 228.2,796.7 229.0,804.2 229.8,811.6 230.5,819.1 231.2,826.4 232.0,833.7 232.8,840.9 233.5,847.9 234.2,854.7 235.0,861.3 235.8,867.4 236.5,872.9 237.2,877.4 238.0,880.7 238.8,882.4 239.5,882.1 240.2,880.1 241.0,876.6"/>
<polyline fill="none" stroke="#7da90d" stroke-width="2.03" stroke-dasharray="2.3 0.77" stroke-linejoin="round" points="239.5,882.1 240.2,880.1 241.0,876.6 241.8,872.1 242.5,866.8 243.2,860.9 244.0,854.7 244.8,848.2 245.5,841.5 246.2,834.7 247.0,827.7 247.8,820.7 248.5,813.6 249.2,806.5 250.0,799.3 250.8,792.1 251.5,784.9 252.2,777.6 253.0,770.4 253.8,763.1 254.5,755.9 255.2,748.7 256.0,741.4 256.8,734.2 257.5,727.1 258.2,719.9 259.0,712.9 259.8,705.9 260.5,699.1 261.2,692.3 262.0,685.8 262.8,679.6 263.5,673.7 264.2,668.4 265.0,663.8 265.8,660.4 266.5,658.3 267.2,658.0 268.0,659.5 268.8,662.6 269.5,666.8 270.2,672.0 271.0,677.7 271.8,683.9 272.5,690.4 273.2,697.2 274.0,704.1 274.8,711.1 275.5,718.2 276.2,725.4 277.0,732.6 277.8,739.9 278.5,747.2 279.2,754.6 280.0,761.9 280.8,769.3 281.5,776.7 282.2,784.0 283.0,791.4 283.8,798.7 284.5,806.0 285.2,813.3 286.0,820.5 286.8,827.7 287.5,834.8 288.2,841.7 289.0,848.6 289.8,855.2 290.5,861.5 291.2,867.4 292.0,872.8 292.8,877.3 293.5,880.7 294.2,882.6 295.0,882.8 295.8,881.3 296.5,878.4 297.2,874.3 298.0,869.4 298.8,863.8 299.5,857.9 300.2,851.6 301.0,845.1 301.8,838.4 302.5,831.6 303.2,824.7 304.0,817.7 304.8,810.6 305.5,803.6 306.2,796.4 307.0,789.3 307.8,782.1 308.5,774.9 309.2,767.7 310.0,760.6 310.8,753.4 311.5,746.2 312.2,739.1 313.0,731.9 313.8,724.8 314.5,717.8 315.2,710.8 316.0,704.0 316.8,697.2 317.5,690.6 318.2,684.2 319.0,678.1 319.8,672.3 320.5,667.2 321.2,662.8 322.0,659.4 322.8,657.4 323.5,657.0 324.2,658.2 325.0,660.9 325.8,664.7 326.5,669.4 327.2,674.8 328.0,680.6 328.8,686.7 329.5,693.1 330.2,699.7 331.0,706.4 331.8,713.2 332.5,720.1 333.2,727.1 334.0,734.1 334.8,741.1 335.5,748.2 336.2,755.3 337.0,762.4 337.8,769.6 338.5,776.7 339.2,783.8 340.0,791.0 340.8,798.1 341.5,805.1 342.2,812.2 343.0,819.2 343.8,826.1 344.5,833.0 345.2,839.7 346.0,846.4 346.8,852.8 347.5,859.0 348.2,864.9 349.0,870.3 349.8,875.2 350.5,879.1 351.2,882.0 352.0,883.4 352.8,883.2 353.5,881.5 354.2,878.5 355.0,874.3 355.8,869.4 356.5,863.9 357.2,857.9 358.0,851.7 358.8,845.2 359.5,838.5 360.2,831.8 361.0,824.9"/>
<polyline fill="none" stroke="#7eac0d" stroke-width="2.06" stroke-dasharray="2.3 0.68" stroke-linejoin="round" points="359.5,838.5 360.2,831.8 361.0,824.9 361.8,817.9 362.5,810.9 363.2,803.8 364.0,796.7 364.8,789.6 365.5,782.4 366.2,775.2 367.0,768.0 367.8,760.9 368.5,753.7 369.2,746.5 370.0,739.4 370.8,732.3 371.5,725.2 372.2,718.2 373.0,711.2 373.8,704.3 374.5,697.6 375.2,691.0 376.0,684.6 376.8,678.5 377.5,672.7 378.2,667.5 379.0,662.9 379.8,659.3 380.5,656.9 381.2,656.0 382.0,656.7 382.8,658.9 383.5,662.4 384.2,666.9 385.0,672.1 385.8,677.9 386.5,684.0 387.2,690.4 388.0,697.1 388.8,703.9 389.5,710.8 390.2,717.9 391.0,725.0 391.8,732.1 392.5,739.3 393.2,746.6 394.0,753.8 394.8,761.1 395.5,768.4 396.2,775.7 397.0,783.0 397.8,790.3 398.5,797.6 399.2,804.8 400.0,812.0 400.8,819.2 401.5,826.3 402.2,833.3 403.0,840.2 403.8,846.9 404.5,853.5 405.2,859.8 406.0,865.7 406.8,871.2 407.5,876.0 408.2,880.0 409.0,882.7 409.8,884.0 410.5,883.8 411.2,882.1 412.0,879.2 412.8,875.3 413.5,870.6 414.2,865.3 415.0,859.6 415.8,853.6 416.5,847.4 417.2,840.9 418.0,834.3 418.8,827.6 419.5,820.9 420.2,814.0 421.0,807.1 421.8,800.2 422.5,793.2 423.2,786.2 424.0,779.2 424.8,772.1 425.5,765.1 426.2,758.1 427.0,751.0 427.8,744.0 428.5,737.0 429.2,730.1 430.0,723.2 430.8,716.3 431.5,709.5 432.2,702.8 433.0,696.3 433.8,689.8 434.5,683.6 435.2,677.7 436.0,672.1 436.8,667.0 437.5,662.5 438.2,658.9 439.0,656.4 439.8,655.1 440.5,655.4 441.2,657.0 442.0,659.9 442.8,663.8 443.5,668.5 444.2,673.7 445.0,679.4 445.8,685.5 446.5,691.7 447.2,698.2 448.0,704.8 448.8,711.5 449.5,718.3 450.2,725.2 451.0,732.2 451.8,739.1 452.5,746.2 453.2,753.2 454.0,760.3 454.8,767.3 455.5,774.4 456.2,781.5 457.0,788.6 457.8,795.6 458.5,802.6 459.2,809.6 460.0,816.6 460.8,823.5 461.5,830.3 462.2,837.0 463.0,843.6 463.8,850.1 464.5,856.3 465.2,862.3 466.0,867.8 466.8,872.9 467.5,877.4 468.2,881.0 469.0,883.5 469.8,884.7 470.5,884.4 471.2,882.9 472.0,880.2 472.8,876.6 473.5,872.1 474.2,867.1 475.0,861.7 475.8,855.9 476.5,849.9 477.2,843.6 478.0,837.3 478.8,830.8 479.5,824.2 480.2,817.5 481.0,810.7"/>
<polyline fill="none" stroke="#80ae0d" stroke-width="2.08" stroke-dasharray="2.3 0.59" stroke-linejoin="round" points="479.5,824.2 480.2,817.5 481.0,810.7 481.8,804.0 482.5,797.1 483.2,790.3 484.0,783.4 484.8,776.5 485.5,769.6 486.2,762.7 487.0,755.8 487.8,748.9 488.5,742.1 489.2,735.2 490.0,728.4 490.8,721.6 491.5,714.9 492.2,708.3 493.0,701.8 493.8,695.3 494.5,689.1 495.2,683.0 496.0,677.2 496.8,671.7 497.5,666.7 498.2,662.3 499.0,658.6 499.8,655.9 500.5,654.4 501.2,654.2 502.0,655.3 502.8,657.8 503.5,661.3 504.2,665.7 505.0,670.8 505.8,676.3 506.5,682.3 507.2,688.5 508.0,694.9 508.8,701.6 509.5,708.3 510.2,715.2 511.0,722.1 511.8,729.1 512.5,736.2 513.2,743.3 514.0,750.4 514.8,757.6 515.5,764.7 516.2,771.9 517.0,779.1 517.8,786.3 518.5,793.4 519.2,800.5 520.0,807.6 520.8,814.7 521.5,821.7 522.2,828.6 523.0,835.4 523.8,842.1 524.5,848.7 525.2,855.0 526.0,861.1 526.8,866.8 527.5,872.1 528.2,876.7 529.0,880.6 529.8,883.4 530.5,885.0 531.2,885.3 532.0,884.3 532.8,882.1 533.5,879.0 534.2,875.1 535.0,870.5 535.8,865.4 536.5,860.0 537.2,854.3 538.0,848.3 538.8,842.2 539.5,835.9 540.2,829.5 541.0,823.0 541.8,816.4 542.5,809.8 543.2,803.2 544.0,796.5 544.8,789.7 545.5,783.0 546.2,776.2 547.0,769.4 547.8,762.7 548.5,755.9 549.2,749.1 550.0,742.4 550.8,735.6 551.5,729.0 552.2,722.3 553.0,715.7 553.8,709.2 554.5,702.8 555.2,696.5 556.0,690.3 556.8,684.3 557.5,678.5 558.2,673.1 559.0,668.0 559.8,663.4 560.5,659.5 561.2,656.3 562.0,654.2 562.8,653.2 563.5,653.4 564.2,654.8 565.0,657.4 565.8,660.9 566.5,665.2 567.2,670.1 568.0,675.5 568.8,681.2 569.5,687.2 570.2,693.4 571.0,699.8 571.8,706.3 572.5,712.9 573.2,719.6 574.0,726.4 574.8,733.3 575.5,740.2 576.2,747.1 577.0,754.0 577.8,761.0 578.5,767.9 579.2,774.9 580.0,781.9 580.8,788.8 581.5,795.8 582.2,802.7 583.0,809.6 583.8,816.4 584.5,823.2 585.2,829.9 586.0,836.5 586.8,843.0 587.5,849.3 588.2,855.4 589.0,861.3 589.8,866.8 590.5,872.0 591.2,876.5 592.0,880.4 592.8,883.4 593.5,885.3 594.2,886.0 595.0,885.5 595.8,883.8 596.5,881.2 597.2,877.7 598.0,873.4 598.8,868.7 599.5,863.5 600.2,857.9 601.0,852.1"/>
<polyline fill="none" stroke="#82b10e" stroke-width="2.11" stroke-dasharray="2.3 0.50" stroke-linejoin="round" points="599.5,863.5 600.2,857.9 601.0,852.1 601.8,846.1 602.5,839.9 603.2,833.5 604.0,827.1 604.8,820.6 605.5,814.0 606.2,807.4 607.0,800.7 607.8,794.0 608.5,787.2 609.2,780.4 610.0,773.7 610.8,766.9 611.5,760.1 612.2,753.3 613.0,746.5 613.8,739.8 614.5,733.1 615.2,726.4 616.0,719.8 616.8,713.2 617.5,706.7 618.2,700.3 619.0,694.1 619.8,688.0 620.5,682.1 621.2,676.4 622.0,671.1 622.8,666.1 623.5,661.7 624.2,657.9 625.0,655.0 625.8,653.0 626.5,652.1 627.2,652.4 628.0,653.8 628.8,656.4 629.5,659.9 630.2,664.1 631.0,668.9 631.8,674.2 632.5,679.9 633.2,685.8 634.0,692.0 634.8,698.4 635.5,704.9 636.2,711.5 637.0,718.2 637.8,725.0 638.5,731.8 639.2,738.7 640.0,745.6 640.8,752.6 641.5,759.6 642.2,766.5 643.0,773.5 643.8,780.5 644.5,787.5 645.2,794.4 646.0,801.3 646.8,808.2 647.5,815.1 648.2,821.8 649.0,828.5 649.8,835.1 650.5,841.6 651.2,847.9 652.0,854.1 652.8,860.0 653.5,865.5 654.2,870.7 655.0,875.3 655.8,879.3 656.5,882.5 657.2,884.7 658.0,885.7 658.8,885.7 659.5,884.5 660.2,882.4 661.0,879.5 661.8,875.9 662.5,871.6 663.2,867.0 664.0,861.9 664.8,856.5 665.5,850.9 666.2,845.1 667.0,839.2 667.8,833.1 668.5,826.9 669.2,820.7 670.0,814.4 670.8,808.0 671.5,801.5 672.2,795.1 673.0,788.6 673.8,782.1 674.5,775.6 675.2,769.0 676.0,762.5 676.8,756.0 677.5,749.4 678.2,742.9 679.0,736.5 679.8,730.0 680.5,723.6 681.2,717.3 682.0,711.0 682.8,704.8 683.5,698.7 684.2,692.7 685.0,686.8 685.8,681.2 686.5,675.8 687.2,670.7 688.0,665.9 688.8,661.6 689.5,657.9 690.2,654.9 691.0,652.7 691.8,651.4 692.5,651.2 693.2,652.0 694.0,653.8 694.8,656.5 695.5,660.0 696.2,664.1 697.0,668.8 697.8,673.8 698.5,679.2 699.2,684.9 700.0,690.7 700.8,696.8 701.5,702.9 702.2,709.2 703.0,715.6 703.8,722.1 704.5,728.6 705.2,735.1 706.0,741.7 706.8,748.3 707.5,755.0 708.2,761.7 709.0,768.3 709.8,775.0 710.5,781.7 711.2,788.3 712.0,795.0 712.8,801.6 713.5,808.1 714.2,814.7 715.0,821.1 715.8,827.5 716.5,833.8 717.2,840.0 718.0,846.1 718.8,852.0 719.5,857.6 720.2,863.0 721.0,868.1"/>
<polyline fill="none" stroke="#85b40e" stroke-width="2.14" stroke-dasharray="2.3 0.40" stroke-linejoin="round" points="719.5,857.6 720.2,863.0 721.0,868.1 721.8,872.7 722.5,876.9 723.2,880.3 724.0,883.0 724.8,884.8 725.5,885.6 726.2,885.4 727.0,884.3 727.8,882.2 728.5,879.4 729.2,875.9 730.0,871.8 730.8,867.3 731.5,862.5 732.2,857.3 733.0,851.9 733.8,846.3 734.5,840.5 735.2,834.6 736.0,828.6 736.8,822.5 737.5,816.3 738.2,810.1 739.0,803.8 739.8,797.4 740.5,791.1 741.2,784.7 742.0,778.3 742.8,771.9 743.5,765.5 744.2,759.1 745.0,752.7 745.8,746.3 746.5,739.9 747.2,733.6 748.0,727.3 748.8,721.0 749.5,714.8 750.2,708.6 751.0,702.6 751.8,696.6 752.5,690.8 753.2,685.2 754.0,679.7 754.8,674.4 755.5,669.5 756.2,664.9 757.0,660.8 757.8,657.2 758.5,654.2 759.2,652.0 760.0,650.7 760.8,650.2 761.5,650.8 762.2,652.3 763.0,654.7 763.8,657.8 764.5,661.6 765.2,665.9 766.0,670.6 766.8,675.8 767.5,681.2 768.2,686.8 769.0,692.6 769.8,698.6 770.5,704.7 771.2,710.9 772.0,717.2 772.8,723.5 773.5,729.9 774.2,736.4 775.0,742.9 775.8,749.4 776.5,756.0 777.2,762.5 778.0,769.1 778.8,775.7 779.5,782.2 780.2,788.8 781.0,795.3 781.8,801.8 782.5,808.2 783.2,814.7 784.0,821.0 784.8,827.3 785.5,833.5 786.2,839.5 787.0,845.5 787.8,851.2 788.5,856.8 789.2,862.1 790.0,867.1 790.8,871.7 791.5,875.8 792.2,879.3 793.0,882.2 793.8,884.2 794.5,885.3 795.2,885.5 796.0,884.7 796.8,883.0 797.5,880.5 798.2,877.4 799.0,873.6 799.8,869.3 800.5,864.6 801.2,859.5 802.0,854.2 802.8,848.7 803.5,842.9 804.2,837.1 805.0,831.1 805.8,825.0 806.5,818.8 807.2,812.5 808.0,806.2 808.8,799.8 809.5,793.4 810.2,787.0 811.0,780.5 811.8,774.1 812.5,767.6 813.2,761.1 814.0,754.6 814.8,748.2 815.5,741.7 816.2,735.3 817.0,728.9 817.8,722.6 818.5,716.3 819.2,710.1 820.0,703.9 820.8,697.9 821.5,692.0 822.2,686.2 823.0,680.7 823.8,675.3 824.5,670.3 825.2,665.5 826.0,661.2 826.8,657.4 827.5,654.3 828.2,651.8 829.0,650.1 829.8,649.4 830.5,649.5 831.2,650.5 832.0,652.4 832.8,655.0 833.5,658.3 834.2,662.1 835.0,666.4 835.8,671.1 836.5,676.1 837.2,681.3 838.0,686.8 838.8,692.5 839.5,698.3 840.2,704.2 841.0,710.2"/>
<polyline fill="none" stroke="#87b80f" stroke-width="2.17" stroke-dasharray="2.3 0.31" stroke-linejoin="round" points="839.5,698.3 840.2,704.2 841.0,710.2 841.8,716.3 842.5,722.5 843.2,728.7 844.0,735.0 844.8,741.3 845.5,747.7 846.2,754.1 847.0,760.5 847.8,766.9 848.5,773.3 849.2,779.7 850.0,786.0 850.8,792.4 851.5,798.7 852.2,805.1 853.0,811.3 853.8,817.5 854.5,823.7 855.2,829.8 856.0,835.7 856.8,841.6 857.5,847.3 858.2,852.9 859.0,858.2 859.8,863.3 860.5,868.1 861.2,872.5 862.0,876.4 862.8,879.9 863.5,882.6 864.2,884.7 865.0,885.9 865.8,886.3 866.5,885.9 867.2,884.6 868.0,882.6 868.8,879.8 869.5,876.5 870.2,872.7 871.0,868.4 871.8,863.8 872.5,858.9 873.2,853.7 874.0,848.4 874.8,842.8 875.5,837.2 876.2,831.4 877.0,825.5 877.8,819.5 878.5,813.4 879.2,807.3 880.0,801.2 880.8,795.0 881.5,788.8 882.2,782.6 883.0,776.3 883.8,770.0 884.5,763.8 885.2,757.5 886.0,751.3 886.8,745.0 887.5,738.8 888.2,732.6 889.0,726.5 889.8,720.4 890.5,714.3 891.2,708.4 892.0,702.5 892.8,696.7 893.5,691.0 894.2,685.5 895.0,680.2 895.8,675.1 896.5,670.3 897.2,665.8 898.0,661.7 898.8,658.0 899.5,654.9 900.2,652.4 901.0,650.6 901.8,649.6 902.5,649.4 903.2,650.0 904.0,651.3 904.8,653.4 905.5,656.1 906.2,659.3 907.0,663.0 907.8,667.2 908.5,671.6 909.2,676.4 910.0,681.4 910.8,686.6 911.5,692.0 912.2,697.5 913.0,703.1 913.8,708.9 914.5,714.7 915.2,720.6 916.0,726.5 916.8,732.5 917.5,738.5 918.2,744.6 919.0,750.7 919.8,756.8 920.5,762.9 921.2,769.0 922.0,775.2 922.8,781.3 923.5,787.4 924.2,793.5 925.0,799.5 925.8,805.6 926.5,811.6 927.2,817.5 928.0,823.4 928.8,829.2 929.5,835.0 930.2,840.6 931.0,846.1 931.8,851.4 932.5,856.6 933.2,861.5 934.0,866.2 934.8,870.6 935.5,874.7 936.2,878.3 937.0,881.4 937.8,883.9 938.5,885.7 939.2,886.9 940.0,887.3 940.8,886.9 941.5,885.7 942.2,883.9 943.0,881.3 943.8,878.2 944.5,874.6 945.2,870.5 946.0,866.0 946.8,861.3 947.5,856.3 948.2,851.1 949.0,845.7 949.8,840.1 950.5,834.4 951.2,828.6 952.0,822.8 952.8,816.8 953.5,810.8 954.2,804.7 955.0,798.6 955.8,792.4 956.5,786.3 957.2,780.1 958.0,773.9 958.8,767.6 959.5,761.4 960.2,755.2 961.0,749.0"/>
<polyline fill="none" stroke="#8abb10" stroke-width="2.21" stroke-dasharray="2.3 0.22" stroke-linejoin="round" points="959.5,761.4 960.2,755.2 961.0,749.0 961.8,742.8 962.5,736.7 963.2,730.6 964.0,724.5 964.8,718.5 965.5,712.5 966.2,706.6 967.0,700.8 967.8,695.2 968.5,689.6 969.2,684.3 970.0,679.1 970.8,674.1 971.5,669.4 972.2,665.1 973.0,661.1 973.8,657.6 974.5,654.6 975.2,652.3 976.0,650.6 976.8,649.6 977.5,649.5 978.2,649.9 979.0,651.1 979.8,652.8 980.5,655.0 981.2,657.8 982.0,661.0 982.8,664.6 983.5,668.5 984.2,672.6 985.0,677.0 985.8,681.7 986.5,686.5 987.2,691.4 988.0,696.5 988.8,701.7 989.5,707.0 990.2,712.3 991.0,717.8 991.8,723.3 992.5,728.8 993.2,734.4 994.0,740.0 994.8,745.6 995.5,751.3 996.2,757.0 997.0,762.7 997.8,768.4 998.5,774.1 999.2,779.7 1000.0,785.4 1000.8,791.1 1001.5,796.8 1002.2,802.4 1003.0,808.0 1003.8,813.5 1004.5,819.1 1005.2,824.5 1006.0,829.9 1006.8,835.2 1007.5,840.4 1008.2,845.6 1009.0,850.5 1009.8,855.4 1010.5,860.1 1011.2,864.5 1012.0,868.7 1012.8,872.7 1013.5,876.3 1014.2,879.5 1015.0,882.3 1015.8,884.7 1016.5,886.4 1017.2,887.6 1018.0,888.2 1018.8,888.1 1019.5,887.3 1020.2,885.8 1021.0,883.6 1021.8,880.8 1022.5,877.4 1023.2,873.6 1024.0,869.4 1024.8,864.9 1025.5,860.1 1026.2,855.0 1027.0,849.7 1027.8,844.3 1028.5,838.7 1029.2,833.0 1030.0,827.2 1030.8,821.3 1031.5,815.3 1032.2,809.2 1033.0,803.2 1033.8,797.0 1034.5,790.9 1035.2,784.7 1036.0,778.5 1036.8,772.2 1037.5,766.0 1038.2,759.8 1039.0,753.6 1039.8,747.4 1040.5,741.2 1041.2,735.1 1042.0,729.0 1042.8,722.9 1043.5,716.9 1044.2,711.0 1045.0,705.2 1045.8,699.4 1046.5,693.8 1047.2,688.4 1048.0,683.1 1048.8,678.0 1049.5,673.1 1050.2,668.6 1051.0,664.3 1051.8,660.5 1052.5,657.2 1053.2,654.3 1054.0,652.1 1054.8,650.5 1055.5,649.7 1056.2,649.5 1057.0,650.0 1057.8,651.0 1058.5,652.5 1059.2,654.5 1060.0,656.9 1060.8,659.7 1061.5,662.9 1062.2,666.4 1063.0,670.1 1063.8,674.1 1064.5,678.3 1065.2,682.6 1066.0,687.1 1066.8,691.8 1067.5,696.5 1068.2,701.4 1069.0,706.3 1069.8,711.3 1070.5,716.4 1071.2,721.6 1072.0,726.7 1072.8,732.0 1073.5,737.2 1074.2,742.5 1075.0,747.8 1075.8,753.2 1076.5,758.5 1077.2,763.9 1078.0,769.2 1078.8,774.6 1079.5,779.9 1080.2,785.3 1081.0,790.6"/>
<polyline fill="none" stroke="#8dbf10" stroke-width="2.25" stroke-dasharray="2.3 0.13" stroke-linejoin="round" points="1079.5,779.9 1080.2,785.3 1081.0,790.6 1081.8,795.9 1082.5,801.2 1083.2,806.5 1084.0,811.7 1084.8,816.9 1085.5,822.0 1086.2,827.1 1087.0,832.1 1087.8,837.1 1088.5,841.9 1089.2,846.7 1090.0,851.3 1090.8,855.8 1091.5,860.2 1092.2,864.3 1093.0,868.3 1093.8,872.0 1094.5,875.4 1095.2,878.6 1096.0,881.4 1096.8,883.7 1097.5,885.7 1098.2,887.2 1099.0,888.2 1099.8,888.6 1100.5,888.5 1101.2,887.7 1102.0,886.2 1102.8,884.0 1103.5,881.3 1104.2,878.1 1105.0,874.4 1105.8,870.4 1106.5,866.0 1107.2,861.3 1108.0,856.3 1108.8,851.2 1109.5,845.9 1110.2,840.4 1111.0,834.8 1111.8,829.1 1112.5,823.3 1113.2,817.4 1114.0,811.5 1114.8,805.5 1115.5,799.4 1116.2,793.4 1117.0,787.2 1117.8,781.1 1118.5,775.0 1119.2,768.8 1120.0,762.7 1120.8,756.5 1121.5,750.4 1122.2,744.3 1123.0,738.2 1123.8,732.2 1124.5,726.2 1125.2,720.3 1126.0,714.4 1126.8,708.6 1127.5,703.0 1128.2,697.4 1129.0,692.0 1129.8,686.7 1130.5,681.6 1131.2,676.8 1132.0,672.2 1132.8,667.9 1133.5,663.9 1134.2,660.4 1135.0,657.3 1135.8,654.8 1136.5,652.9 1137.2,651.6 1138.0,651.0 1138.8,651.0 1139.5,651.5 1140.2,652.5 1141.0,653.8 1141.8,655.6 1142.5,657.7 1143.2,660.2 1144.0,663.0 1144.8,666.1 1145.5,669.4 1146.2,672.9 1147.0,676.6 1147.8,680.5 1148.5,684.5 1149.2,688.7 1150.0,693.0 1150.8,697.4 1151.5,701.9 1152.2,706.4 1153.0,711.0 1153.8,715.7 1154.5,720.4 1155.2,725.2 1156.0,730.0 1156.8,734.9 1157.5,739.8 1158.2,744.7 1159.0,749.6 1159.8,754.6 1160.5,759.5 1161.2,764.5 1162.0,769.4 1162.8,774.4 1163.5,779.4 1164.2,784.3 1165.0,789.3 1165.8,794.2 1166.5,799.1 1167.2,804.0 1168.0,808.9 1168.8,813.7 1169.5,818.5 1170.2,823.3 1171.0,828.0 1171.8,832.6 1172.5,837.2 1173.2,841.7 1174.0,846.1 1174.8,850.4 1175.5,854.6 1176.2,858.6 1177.0,862.6 1177.8,866.3 1178.5,869.9 1179.2,873.2 1180.0,876.3 1180.8,879.2 1181.5,881.7 1182.2,883.9 1183.0,885.7 1183.8,887.2 1184.5,888.2 1185.2,888.8 1186.0,889.0 1186.8,888.6 1187.5,887.6 1188.2,886.0 1189.0,883.8 1189.8,881.0 1190.5,877.8 1191.2,874.1 1192.0,870.1 1192.8,865.8 1193.5,861.2 1194.2,856.3 1195.0,851.3 1195.8,846.1 1196.5,840.7 1197.2,835.2 1198.0,829.6 1198.8,823.9 1199.5,818.1 1200.2,812.2 1201.0,806.3"/>
<polyline fill="none" stroke="#90c311" stroke-width="2.29" stroke-linejoin="round" points="1199.5,818.1 1200.2,812.2 1201.0,806.3 1201.8,800.3 1202.5,794.3 1203.2,788.3 1204.0,782.2 1204.8,776.2 1205.5,770.1 1206.2,764.0 1207.0,757.9 1207.8,751.9 1208.5,745.8 1209.2,739.8 1210.0,733.8 1210.8,727.9 1211.5,722.0 1212.2,716.2 1213.0,710.5 1213.8,704.9 1214.5,699.3 1215.2,694.0 1216.0,688.7 1216.8,683.7 1217.5,678.9 1218.2,674.3 1219.0,670.0 1219.8,666.1 1220.5,662.5 1221.2,659.4 1222.0,656.9 1222.8,654.8 1223.5,653.4 1224.2,652.6 1225.0,652.4 1225.8,652.8 1226.5,653.5 1227.2,654.7 1228.0,656.3 1228.8,658.2 1229.5,660.5 1230.2,663.0 1231.0,665.9 1231.8,669.0 1232.5,672.4 1233.2,675.9 1234.0,679.6 1234.8,683.5 1235.5,687.6 1236.2,691.7 1237.0,696.0 1237.8,700.4 1238.5,704.9 1239.2,709.4 1240.0,714.1 1240.8,718.7 1241.5,723.5 1242.2,728.3 1243.0,733.1 1243.8,738.0 1244.5,742.9 1245.2,747.8 1246.0,752.7 1246.8,757.7 1247.5,762.7 1248.2,767.7 1249.0,772.6 1249.8,777.6 1250.5,782.6 1251.2,787.6 1252.0,792.6 1252.8,797.6 1253.5,802.5 1254.2,807.5 1255.0,812.4 1255.8,817.3 1256.5,822.1 1257.2,826.9 1258.0,831.6 1258.8,836.3 1259.5,841.0 1260.2,845.5 1261.0,850.0 1261.8,854.4 1262.5,858.6 1263.2,862.8 1264.0,866.8 1264.8,870.6 1265.5,874.3 1266.2,877.8 1267.0,881.0 1267.8,884.0 1268.5,886.8 1269.2,889.2 1270.0,891.3 1270.8,893.0 1271.5,894.4 1272.2,895.4 1273.0,895.9 1273.8,896.0 1274.5,895.6 1275.2,894.6 1276.0,893.2 1276.8,891.3 1277.5,889.0 1278.2,886.2 1279.0,883.1 1279.8,879.7 1280.5,876.0 1281.2,872.1 1282.0,867.9 1282.8,863.5 1283.5,858.9 1284.2,854.2 1285.0,849.4 1285.8,844.4 1286.5,839.4 1287.2,834.3 1288.0,829.0 1288.8,823.7 1289.5,818.4 1290.2,813.0 1291.0,807.6 1291.8,802.1 1292.5,796.6 1293.2,791.1 1294.0,785.6 1294.8,780.1 1295.5,774.5 1296.2,769.0 1297.0,763.4 1297.8,757.9 1298.5,752.4 1299.2,746.9 1300.0,741.5 1300.8,736.1 1301.5,730.7 1302.2,725.4 1303.0,720.1 1303.8,714.9 1304.5,709.8 1305.2,704.8 1306.0,699.9 1306.8,695.1 1307.5,690.5 1308.2,686.0 1309.0,681.7 1309.8,677.6 1310.5,673.8 1311.2,670.2 1312.0,666.9 1312.8,664.0 1313.5,661.5 1314.2,659.3 1315.0,657.6 1315.8,656.4 1316.5,655.7 1317.2,655.5 1318.0,655.7 1318.8,656.3 1319.5,657.4 1320.2,658.7 1321.0,660.5"/>
<polyline fill="none" stroke="#93c812" stroke-width="2.33" stroke-linejoin="round" points="1319.5,657.4 1320.2,658.7 1321.0,660.5 1321.8,662.6 1322.5,665.0 1323.2,667.7 1324.0,670.6 1324.8,673.8 1325.5,677.2 1326.2,680.8 1327.0,684.5 1327.8,688.5 1328.5,692.5 1329.2,696.7 1330.0,701.0 1330.8,705.3 1331.5,709.8 1332.2,714.3 1333.0,719.0 1333.8,723.6 1334.5,728.3 1335.2,733.1 1336.0,737.9 1336.8,742.8 1337.5,747.7 1338.2,752.6 1339.0,757.5 1339.8,762.4 1340.5,767.4 1341.2,772.3 1342.0,777.3 1342.8,782.3 1343.5,787.2 1344.2,792.2 1345.0,797.1 1345.8,802.1 1346.5,807.0 1347.2,811.9 1348.0,816.7 1348.8,821.5 1349.5,826.3 1350.2,831.1 1351.0,835.7 1351.8,840.4 1352.5,844.9 1353.2,849.4 1354.0,853.8 1354.8,858.0 1355.5,862.2 1356.2,866.2 1357.0,870.1 1357.8,873.9 1358.5,877.4 1359.2,880.8 1360.0,883.9 1360.8,886.8 1361.5,889.4 1362.2,891.7 1363.0,893.6 1363.8,895.3 1364.5,896.5 1365.2,897.4 1366.0,897.9 1366.8,897.9 1367.5,897.6 1368.2,896.8 1369.0,895.7 1369.8,894.2 1370.5,892.3 1371.2,890.2 1372.0,887.7 1372.8,884.9 1373.5,881.9 1374.2,878.6 1375.0,875.2 1375.8,871.6 1376.5,867.7 1377.2,863.8 1378.0,859.7 1378.8,855.5 1379.5,851.1 1380.2,846.7 1381.0,842.2 1381.8,837.6 1382.5,833.0 1383.2,828.3 1384.0,823.5 1384.8,818.7 1385.5,813.9 1386.2,809.0 1387.0,804.1 1387.8,799.2 1388.5,794.3 1389.2,789.3 1390.0,784.3 1390.8,779.3 1391.5,774.4 1392.2,769.4 1393.0,764.4 1393.8,759.4 1394.5,754.5 1395.2,749.6 1396.0,744.6 1396.8,739.8 1397.5,734.9 1398.2,730.1 1399.0,725.3 1399.8,720.6 1400.5,715.9 1401.2,711.3 1402.0,706.8 1402.8,702.3 1403.5,698.0 1404.2,693.7 1405.0,689.6 1405.8,685.6 1406.5,681.7 1407.2,678.1 1408.0,674.5 1408.8,671.2 1409.5,668.1 1410.2,665.3 1411.0,662.7 1411.8,660.4 1412.5,658.5 1413.2,656.8 1414.0,655.6 1414.8,654.7 1415.5,654.1 1416.2,654.0 1417.0,654.3 1417.8,654.9 1418.5,655.8 1419.2,657.1 1420.0,658.7 1420.8,660.6 1421.5,662.8 1422.2,665.2 1423.0,667.9 1423.8,670.8 1424.5,673.9 1425.2,677.2 1426.0,680.7 1426.8,684.3 1427.5,688.1 1428.2,691.9 1429.0,695.9 1429.8,700.0 1430.5,704.2 1431.2,708.4 1432.0,712.8 1432.8,717.1 1433.5,721.6 1434.2,726.1 1435.0,730.6 1435.8,735.2 1436.5,739.8 1437.2,744.4 1438.0,749.0 1438.8,753.7 1439.5,758.4 1440.2,763.1 1441.0,767.8"/>
<polyline fill="none" stroke="#96cc13" stroke-width="2.37" stroke-linejoin="round" points="1439.5,758.4 1440.2,763.1 1441.0,767.8 1441.8,772.5 1442.5,777.3 1443.2,782.0 1444.0,786.7 1444.8,791.4 1445.5,796.1 1446.2,800.7 1447.0,805.4 1447.8,810.0 1448.5,814.6 1449.2,819.1 1450.0,823.6 1450.8,828.1 1451.5,832.5 1452.2,836.9 1453.0,841.2 1453.8,845.4 1454.5,849.5 1455.2,853.6 1456.0,857.5 1456.8,861.3 1457.5,865.0 1458.2,868.6 1459.0,872.0 1459.8,875.2 1460.5,878.2 1461.2,881.0 1462.0,883.6 1462.8,886.0 1463.5,888.1 1464.2,889.9 1465.0,891.3 1465.8,892.5 1466.5,893.4 1467.2,893.9 1468.0,894.0 1468.8,893.8 1469.5,893.3 1470.2,892.5 1471.0,891.3 1471.8,889.9 1472.5,888.1 1473.2,886.0 1474.0,883.7 1474.8,881.2 1475.5,878.4 1476.2,875.4 1477.0,872.2 1477.8,868.9 1478.5,865.4 1479.2,861.8 1480.0,858.0 1480.8,854.1 1481.5,850.2 1482.2,846.1 1483.0,841.9 1483.8,837.7 1484.5,833.4 1485.2,829.0 1486.0,824.6 1486.8,820.1 1487.5,815.6 1488.2,811.1 1489.0,806.5 1489.8,801.9 1490.5,797.3 1491.2,792.6 1492.0,788.0 1492.8,783.3 1493.5,778.6 1494.2,773.9 1495.0,769.2 1495.8,764.5 1496.5,759.9 1497.2,755.2 1498.0,750.5 1498.8,745.9 1499.5,741.3 1500.2,736.7 1501.0,732.1 1501.8,727.6 1502.5,723.1 1503.2,718.7 1504.0,714.3 1504.8,709.9 1505.5,705.7 1506.2,701.5 1507.0,697.4 1507.8,693.4 1508.5,689.5 1509.2,685.7 1510.0,682.1 1510.8,678.5 1511.5,675.2 1512.2,672.0 1513.0,669.0 1513.8,666.2 1514.5,663.6 1515.2,661.3 1516.0,659.3 1516.8,657.5 1517.5,656.0 1518.2,654.8 1519.0,654.0 1519.8,653.5 1520.5,653.3 1521.2,653.4 1522.0,653.9 1522.8,654.6 1523.5,655.6 1524.2,656.9 1525.0,658.4 1525.8,660.1 1526.5,662.1 1527.2,664.3 1528.0,666.7 1528.8,669.3 1529.5,672.1 1530.2,675.0 1531.0,678.1 1531.8,681.3 1532.5,684.7 1533.2,688.1 1534.0,691.7 1534.8,695.3 1535.5,699.0 1536.2,702.9 1537.0,706.7 1537.8,710.7 1538.5,714.7 1539.2,718.7 1540.0,722.8 1540.8,727.0 1541.5,731.2 1542.2,735.4 1543.0,739.6 1543.8,743.9 1544.5,748.2 1545.2,752.5 1546.0,756.8 1546.8,761.2 1547.5,765.5 1548.2,769.9 1549.0,774.3 1549.8,778.6 1550.5,783.0 1551.2,787.3 1552.0,791.7 1552.8,796.0 1553.5,800.4 1554.2,804.7 1555.0,808.9 1555.8,813.2 1556.5,817.4 1557.2,821.6 1558.0,825.8 1558.8,829.9 1559.5,834.0 1560.2,838.0 1561.0,842.0"/>
<polyline fill="none" stroke="#9ad113" stroke-width="2.42" stroke-linejoin="round" points="1559.5,834.0 1560.2,838.0 1561.0,842.0 1561.8,845.9 1562.5,849.7 1563.2,853.4 1564.0,857.1 1564.8,860.7 1565.5,864.1 1566.2,867.5 1567.0,870.7 1567.8,873.8 1568.5,876.7 1569.2,879.5 1570.0,882.1 1570.8,884.5 1571.5,886.7 1572.2,888.7 1573.0,890.4 1573.8,891.9 1574.5,893.2 1575.2,894.2 1576.0,894.9 1576.8,895.4 1577.5,895.5 1578.2,895.4 1579.0,894.9 1579.8,894.2 1580.5,893.2 1581.2,892.0 1582.0,890.5 1582.8,888.7 1583.5,886.8 1584.2,884.6 1585.0,882.2 1585.8,879.6 1586.5,876.8 1587.2,873.9 1588.0,870.8 1588.8,867.6 1589.5,864.3 1590.2,860.9 1591.0,857.3 1591.8,853.7 1592.5,849.9 1593.2,846.1 1594.0,842.2 1594.8,838.3 1595.5,834.3 1596.2,830.2 1597.0,826.1 1597.8,821.9 1598.5,817.7 1599.2,813.5 1600.0,809.3 1600.8,805.0 1601.5,800.7 1602.2,796.3 1603.0,792.0 1603.8,787.6 1604.5,783.3 1605.2,778.9 1606.0,774.5 1606.8,770.1 1607.5,765.8 1608.2,761.4 1609.0,757.0 1609.8,752.7 1610.5,748.4 1611.2,744.0 1612.0,739.7 1612.8,735.5 1613.5,731.3 1614.2,727.1 1615.0,722.9 1615.8,718.8 1616.5,714.7 1617.2,710.7 1618.0,706.7 1618.8,702.9 1619.5,699.0 1620.2,695.3 1621.0,691.7 1621.8,688.1 1622.5,684.7 1623.2,681.4 1624.0,678.2 1624.8,675.1 1625.5,672.2 1626.2,669.5 1627.0,666.9 1627.8,664.5 1628.5,662.4 1629.2,660.4 1630.0,658.7 1630.8,657.2 1631.5,656.0 1632.2,655.0 1633.0,654.3 1633.8,653.9 1634.5,653.7 1635.2,653.9 1636.0,654.3 1636.8,654.9 1637.5,655.8 1638.2,657.0 1639.0,658.4 1639.8,660.0 1640.5,661.8 1641.2,663.9 1642.0,666.1 1642.8,668.5 1643.5,671.1 1644.2,673.8 1645.0,676.7 1645.8,679.7 1646.5,682.8 1647.2,686.1 1648.0,689.5 1648.8,692.9 1649.5,696.5 1650.2,700.1 1651.0,703.8 1651.8,707.5 1652.5,711.4 1653.2,715.3 1654.0,719.2 1654.8,723.2 1655.5,727.2 1656.2,731.2 1657.0,735.3 1657.8,739.5 1658.5,743.6 1659.2,747.8 1660.0,752.0 1660.8,756.2 1661.5,760.4 1662.2,764.6 1663.0,768.9 1663.8,773.1 1664.5,777.3 1665.2,781.6 1666.0,785.8 1666.8,790.0 1667.5,794.2 1668.2,798.4 1669.0,802.6 1669.8,806.8 1670.5,810.9 1671.2,815.1 1672.0,819.1 1672.8,823.2 1673.5,827.2 1674.2,831.2 1675.0,835.1 1675.8,839.0 1676.5,842.8 1677.2,846.5 1678.0,850.2 1678.8,853.8 1679.5,857.3 1680.2,860.7 1681.0,864.0"/>
<polyline fill="none" stroke="#9cd414" stroke-width="2.45" stroke-linejoin="round" points="1679.5,857.3 1680.2,860.7 1681.0,864.0 1681.8,867.2 1682.5,870.3 1683.2,873.3 1684.0,876.1 1684.8,878.8 1685.5,881.3 1686.2,883.6 1687.0,885.8 1687.8,887.7 1688.5,889.4 1689.2,891.0 1690.0,892.3 1690.8,893.3 1691.5,894.1 1692.2,894.7 1693.0,895.0"/>
<path d="M7.0,677.0 L7.8,683.9 L8.5,691.2M23.5,852.4 L24.2,859.7 L25.0,866.5 L25.8,872.6 L26.5,877.4 L27.2,880.2 L28.0,880.5 L28.8,878.5 L29.5,874.7 L30.2,869.6 L31.0,863.7 L31.8,857.2 L32.5,850.4M49.0,687.4 L49.8,680.8 L50.5,674.7 L51.2,669.3 L52.0,665.0 L52.8,662.3 L53.5,661.8 L54.2,663.5 L55.0,667.0 L55.8,671.9 L56.5,677.7 L57.2,684.1 L58.0,690.8M74.5,853.8 L75.2,860.4 L76.0,866.7 L76.8,872.3 L77.5,876.9 L78.2,880.0 L79.0,881.1 L79.8,880.1 L80.5,877.1 L81.2,872.7 L82.0,867.3 L82.8,861.2 L83.5,854.8M100.8,687.7 L101.5,681.2 L102.2,675.1 L103.0,669.6 L103.8,665.1 L104.5,662.0 L105.2,660.8 L106.0,661.7 L106.8,664.6 L107.5,669.0 L108.2,674.4 L109.0,680.5 L109.8,687.1M127.0,856.5 L127.8,863.0 L128.5,869.0 L129.2,874.3 L130.0,878.4 L130.8,881.0 L131.5,881.5 L132.2,880.0 L133.0,876.8 L133.8,872.3 L134.5,866.9 L135.2,861.0 L136.0,854.6M153.2,690.0 L154.0,683.5 L154.8,677.3 L155.5,671.6 L156.2,666.6 L157.0,662.8 L157.8,660.4 L158.5,659.9 L159.2,661.4 L160.0,664.7 L160.8,669.2 L161.5,674.7 L162.2,680.7 L163.0,687.2M180.2,854.2 L181.0,860.7 L181.8,866.8 L182.5,872.3 L183.2,876.9 L184.0,880.3 L184.8,881.9 L185.5,881.6 L186.2,879.4 L187.0,875.8 L187.8,871.0 L188.5,865.5 L189.2,859.4 L190.0,853.0M207.2,688.4 L208.0,682.0 L208.8,675.9 L209.5,670.3 L210.2,665.4 L211.0,661.7 L211.8,659.4 L212.5,659.0 L213.2,660.5 L214.0,663.7 L214.8,668.2 L215.5,673.6 L216.2,679.6 L217.0,686.1M234.2,854.7 L235.0,861.3 L235.8,867.4 L236.5,872.9 L237.2,877.4 L238.0,880.7 L238.8,882.4 L239.5,882.1 L240.2,880.1 L241.0,876.6 L241.8,872.1 L242.5,866.8 L243.2,860.9 L244.0,854.7M262.0,685.8 L262.8,679.6 L263.5,673.7 L264.2,668.4 L265.0,663.8 L265.8,660.4 L266.5,658.3 L267.2,658.0 L268.0,659.5 L268.8,662.6 L269.5,666.8 L270.2,672.0 L271.0,677.7 L271.8,683.9M289.8,855.2 L290.5,861.5 L291.2,867.4 L292.0,872.8 L292.8,877.3 L293.5,880.7 L294.2,882.6 L295.0,882.8 L295.8,881.3 L296.5,878.4 L297.2,874.3 L298.0,869.4 L298.8,863.8 L299.5,857.9 L300.2,851.6M318.2,684.2 L319.0,678.1 L319.8,672.3 L320.5,667.2 L321.2,662.8 L322.0,659.4 L322.8,657.4 L323.5,657.0 L324.2,658.2 L325.0,660.9 L325.8,664.7 L326.5,669.4 L327.2,674.8 L328.0,680.6 L328.8,686.7M346.8,852.8 L347.5,859.0 L348.2,864.9 L349.0,870.3 L349.8,875.2 L350.5,879.1 L351.2,882.0 L352.0,883.4 L352.8,883.2 L353.5,881.5 L354.2,878.5 L355.0,874.3 L355.8,869.4 L356.5,863.9 L357.2,857.9M376.0,684.6 L376.8,678.5 L377.5,672.7 L378.2,667.5 L379.0,662.9 L379.8,659.3 L380.5,656.9 L381.2,656.0 L382.0,656.7 L382.8,658.9 L383.5,662.4 L384.2,666.9 L385.0,672.1 L385.8,677.9 L386.5,684.0M404.5,853.5 L405.2,859.8 L406.0,865.7 L406.8,871.2 L407.5,876.0 L408.2,880.0 L409.0,882.7 L409.8,884.0 L410.5,883.8 L411.2,882.1 L412.0,879.2 L412.8,875.3 L413.5,870.6 L414.2,865.3 L415.0,859.6 L415.8,853.6M434.5,683.6 L435.2,677.7 L436.0,672.1 L436.8,667.0 L437.5,662.5 L438.2,658.9 L439.0,656.4 L439.8,655.1 L440.5,655.4 L441.2,657.0 L442.0,659.9 L442.8,663.8 L443.5,668.5 L444.2,673.7 L445.0,679.4 L445.8,685.5M464.5,856.3 L465.2,862.3 L466.0,867.8 L466.8,872.9 L467.5,877.4 L468.2,881.0 L469.0,883.5 L469.8,884.7 L470.5,884.4 L471.2,882.9 L472.0,880.2 L472.8,876.6 L473.5,872.1 L474.2,867.1 L475.0,861.7 L475.8,855.9M495.2,683.0 L496.0,677.2 L496.8,671.7 L497.5,666.7 L498.2,662.3 L499.0,658.6 L499.8,655.9 L500.5,654.4 L501.2,654.2 L502.0,655.3 L502.8,657.8 L503.5,661.3 L504.2,665.7 L505.0,670.8 L505.8,676.3 L506.5,682.3M525.2,855.0 L526.0,861.1 L526.8,866.8 L527.5,872.1 L528.2,876.7 L529.0,880.6 L529.8,883.4 L530.5,885.0 L531.2,885.3 L532.0,884.3 L532.8,882.1 L533.5,879.0 L534.2,875.1 L535.0,870.5 L535.8,865.4 L536.5,860.0 L537.2,854.3M556.8,684.3 L557.5,678.5 L558.2,673.1 L559.0,668.0 L559.8,663.4 L560.5,659.5 L561.2,656.3 L562.0,654.2 L562.8,653.2 L563.5,653.4 L564.2,654.8 L565.0,657.4 L565.8,660.9 L566.5,665.2 L567.2,670.1 L568.0,675.5 L568.8,681.2M588.2,855.4 L589.0,861.3 L589.8,866.8 L590.5,872.0 L591.2,876.5 L592.0,880.4 L592.8,883.4 L593.5,885.3 L594.2,886.0 L595.0,885.5 L595.8,883.8 L596.5,881.2 L597.2,877.7 L598.0,873.4 L598.8,868.7 L599.5,863.5 L600.2,857.9M620.5,682.1 L621.2,676.4 L622.0,671.1 L622.8,666.1 L623.5,661.7 L624.2,657.9 L625.0,655.0 L625.8,653.0 L626.5,652.1 L627.2,652.4 L628.0,653.8 L628.8,656.4 L629.5,659.9 L630.2,664.1 L631.0,668.9 L631.8,674.2 L632.5,679.9M652.0,854.1 L652.8,860.0 L653.5,865.5 L654.2,870.7 L655.0,875.3 L655.8,879.3 L656.5,882.5 L657.2,884.7 L658.0,885.7 L658.8,885.7 L659.5,884.5 L660.2,882.4 L661.0,879.5 L661.8,875.9 L662.5,871.6 L663.2,867.0 L664.0,861.9 L664.8,856.5M685.8,681.2 L686.5,675.8 L687.2,670.7 L688.0,665.9 L688.8,661.6 L689.5,657.9 L690.2,654.9 L691.0,652.7 L691.8,651.4 L692.5,651.2 L693.2,652.0 L694.0,653.8 L694.8,656.5 L695.5,660.0 L696.2,664.1 L697.0,668.8 L697.8,673.8 L698.5,679.2M719.5,857.6 L720.2,863.0 L721.0,868.1 L721.8,872.7 L722.5,876.9 L723.2,880.3 L724.0,883.0 L724.8,884.8 L725.5,885.6 L726.2,885.4 L727.0,884.3 L727.8,882.2 L728.5,879.4 L729.2,875.9 L730.0,871.8 L730.8,867.3 L731.5,862.5 L732.2,857.3M754.0,679.7 L754.8,674.4 L755.5,669.5 L756.2,664.9 L757.0,660.8 L757.8,657.2 L758.5,654.2 L759.2,652.0 L760.0,650.7 L760.8,650.2 L761.5,650.8 L762.2,652.3 L763.0,654.7 L763.8,657.8 L764.5,661.6 L765.2,665.9 L766.0,670.6 L766.8,675.8 L767.5,681.2M788.5,856.8 L789.2,862.1 L790.0,867.1 L790.8,871.7 L791.5,875.8 L792.2,879.3 L793.0,882.2 L793.8,884.2 L794.5,885.3 L795.2,885.5 L796.0,884.7 L796.8,883.0 L797.5,880.5 L798.2,877.4 L799.0,873.6 L799.8,869.3 L800.5,864.6 L801.2,859.5 L802.0,854.2M823.0,680.7 L823.8,675.3 L824.5,670.3 L825.2,665.5 L826.0,661.2 L826.8,657.4 L827.5,654.3 L828.2,651.8 L829.0,650.1 L829.8,649.4 L830.5,649.5 L831.2,650.5 L832.0,652.4 L832.8,655.0 L833.5,658.3 L834.2,662.1 L835.0,666.4 L835.8,671.1 L836.5,676.1 L837.2,681.3M859.0,858.2 L859.8,863.3 L860.5,868.1 L861.2,872.5 L862.0,876.4 L862.8,879.9 L863.5,882.6 L864.2,884.7 L865.0,885.9 L865.8,886.3 L866.5,885.9 L867.2,884.6 L868.0,882.6 L868.8,879.8 L869.5,876.5 L870.2,872.7 L871.0,868.4 L871.8,863.8 L872.5,858.9 L873.2,853.7M895.0,680.2 L895.8,675.1 L896.5,670.3 L897.2,665.8 L898.0,661.7 L898.8,658.0 L899.5,654.9 L900.2,652.4 L901.0,650.6 L901.8,649.6 L902.5,649.4 L903.2,650.0 L904.0,651.3 L904.8,653.4 L905.5,656.1 L906.2,659.3 L907.0,663.0 L907.8,667.2 L908.5,671.6 L909.2,676.4 L910.0,681.4M932.5,856.6 L933.2,861.5 L934.0,866.2 L934.8,870.6 L935.5,874.7 L936.2,878.3 L937.0,881.4 L937.8,883.9 L938.5,885.7 L939.2,886.9 L940.0,887.3 L940.8,886.9 L941.5,885.7 L942.2,883.9 L943.0,881.3 L943.8,878.2 L944.5,874.6 L945.2,870.5 L946.0,866.0 L946.8,861.3 L947.5,856.3M970.0,679.1 L970.8,674.1 L971.5,669.4 L972.2,665.1 L973.0,661.1 L973.8,657.6 L974.5,654.6 L975.2,652.3 L976.0,650.6 L976.8,649.6 L977.5,649.5 L978.2,649.9 L979.0,651.1 L979.8,652.8 L980.5,655.0 L981.2,657.8 L982.0,661.0 L982.8,664.6 L983.5,668.5 L984.2,672.6 L985.0,677.0 L985.8,681.7M1009.8,855.4 L1010.5,860.1 L1011.2,864.5 L1012.0,868.7 L1012.8,872.7 L1013.5,876.3 L1014.2,879.5 L1015.0,882.3 L1015.8,884.7 L1016.5,886.4 L1017.2,887.6 L1018.0,888.2 L1018.8,888.1 L1019.5,887.3 L1020.2,885.8 L1021.0,883.6 L1021.8,880.8 L1022.5,877.4 L1023.2,873.6 L1024.0,869.4 L1024.8,864.9 L1025.5,860.1 L1026.2,855.0M1048.8,678.0 L1049.5,673.1 L1050.2,668.6 L1051.0,664.3 L1051.8,660.5 L1052.5,657.2 L1053.2,654.3 L1054.0,652.1 L1054.8,650.5 L1055.5,649.7 L1056.2,649.5 L1057.0,650.0 L1057.8,651.0 L1058.5,652.5 L1059.2,654.5 L1060.0,656.9 L1060.8,659.7 L1061.5,662.9 L1062.2,666.4 L1063.0,670.1 L1063.8,674.1 L1064.5,678.3 L1065.2,682.6M1090.8,855.8 L1091.5,860.2 L1092.2,864.3 L1093.0,868.3 L1093.8,872.0 L1094.5,875.4 L1095.2,878.6 L1096.0,881.4 L1096.8,883.7 L1097.5,885.7 L1098.2,887.2 L1099.0,888.2 L1099.8,888.6 L1100.5,888.5 L1101.2,887.7 L1102.0,886.2 L1102.8,884.0 L1103.5,881.3 L1104.2,878.1 L1105.0,874.4 L1105.8,870.4 L1106.5,866.0 L1107.2,861.3 L1108.0,856.3M1130.5,681.6 L1131.2,676.8 L1132.0,672.2 L1132.8,667.9 L1133.5,663.9 L1134.2,660.4 L1135.0,657.3 L1135.8,654.8 L1136.5,652.9 L1137.2,651.6 L1138.0,651.0 L1138.8,651.0 L1139.5,651.5 L1140.2,652.5 L1141.0,653.8 L1141.8,655.6 L1142.5,657.7 L1143.2,660.2 L1144.0,663.0 L1144.8,666.1 L1145.5,669.4 L1146.2,672.9 L1147.0,676.6 L1147.8,680.5M1176.2,858.6 L1177.0,862.6 L1177.8,866.3 L1178.5,869.9 L1179.2,873.2 L1180.0,876.3 L1180.8,879.2 L1181.5,881.7 L1182.2,883.9 L1183.0,885.7 L1183.8,887.2 L1184.5,888.2 L1185.2,888.8 L1186.0,889.0 L1186.8,888.6 L1187.5,887.6 L1188.2,886.0 L1189.0,883.8 L1189.8,881.0 L1190.5,877.8 L1191.2,874.1 L1192.0,870.1 L1192.8,865.8 L1193.5,861.2M1216.8,683.7 L1217.5,678.9 L1218.2,674.3 L1219.0,670.0 L1219.8,666.1 L1220.5,662.5 L1221.2,659.4 L1222.0,656.9 L1222.8,654.8 L1223.5,653.4 L1224.2,652.6 L1225.0,652.4 L1225.8,652.8 L1226.5,653.5 L1227.2,654.7 L1228.0,656.3 L1228.8,658.2 L1229.5,660.5 L1230.2,663.0 L1231.0,665.9 L1231.8,669.0 L1232.5,672.4 L1233.2,675.9 L1234.0,679.6 L1234.8,683.5M1263.2,862.8 L1264.0,866.8 L1264.8,870.6 L1265.5,874.3 L1266.2,877.8 L1267.0,881.0 L1267.8,884.0 L1268.5,886.8 L1269.2,889.2 L1270.0,891.3 L1270.8,893.0 L1271.5,894.4 L1272.2,895.4 L1273.0,895.9 L1273.8,896.0 L1274.5,895.6 L1275.2,894.6 L1276.0,893.2 L1276.8,891.3 L1277.5,889.0 L1278.2,886.2 L1279.0,883.1 L1279.8,879.7 L1280.5,876.0 L1281.2,872.1 L1282.0,867.9 L1282.8,863.5M1308.2,686.0 L1309.0,681.7 L1309.8,677.6 L1310.5,673.8 L1311.2,670.2 L1312.0,666.9 L1312.8,664.0 L1313.5,661.5 L1314.2,659.3 L1315.0,657.6 L1315.8,656.4 L1316.5,655.7 L1317.2,655.5 L1318.0,655.7 L1318.8,656.3 L1319.5,657.4 L1320.2,658.7 L1321.0,660.5 L1321.8,662.6 L1322.5,665.0 L1323.2,667.7 L1324.0,670.6 L1324.8,673.8 L1325.5,677.2 L1326.2,680.8 L1327.0,684.5 L1327.8,688.5M1356.2,866.2 L1357.0,870.1 L1357.8,873.9 L1358.5,877.4 L1359.2,880.8 L1360.0,883.9 L1360.8,886.8 L1361.5,889.4 L1362.2,891.7 L1363.0,893.6 L1363.8,895.3 L1364.5,896.5 L1365.2,897.4 L1366.0,897.9 L1366.8,897.9 L1367.5,897.6 L1368.2,896.8 L1369.0,895.7 L1369.8,894.2 L1370.5,892.3 L1371.2,890.2 L1372.0,887.7 L1372.8,884.9 L1373.5,881.9 L1374.2,878.6 L1375.0,875.2 L1375.8,871.6 L1376.5,867.7 L1377.2,863.8M1405.8,685.6 L1406.5,681.7 L1407.2,678.1 L1408.0,674.5 L1408.8,671.2 L1409.5,668.1 L1410.2,665.3 L1411.0,662.7 L1411.8,660.4 L1412.5,658.5 L1413.2,656.8 L1414.0,655.6 L1414.8,654.7 L1415.5,654.1 L1416.2,654.0 L1417.0,654.3 L1417.8,654.9 L1418.5,655.8 L1419.2,657.1 L1420.0,658.7 L1420.8,660.6 L1421.5,662.8 L1422.2,665.2 L1423.0,667.9 L1423.8,670.8 L1424.5,673.9 L1425.2,677.2 L1426.0,680.7 L1426.8,684.3M1456.8,861.3 L1457.5,865.0 L1458.2,868.6 L1459.0,872.0 L1459.8,875.2 L1460.5,878.2 L1461.2,881.0 L1462.0,883.6 L1462.8,886.0 L1463.5,888.1 L1464.2,889.9 L1465.0,891.3 L1465.8,892.5 L1466.5,893.4 L1467.2,893.9 L1468.0,894.0 L1468.8,893.8 L1469.5,893.3 L1470.2,892.5 L1471.0,891.3 L1471.8,889.9 L1472.5,888.1 L1473.2,886.0 L1474.0,883.7 L1474.8,881.2 L1475.5,878.4 L1476.2,875.4 L1477.0,872.2 L1477.8,868.9 L1478.5,865.4 L1479.2,861.8M1509.2,685.7 L1510.0,682.1 L1510.8,678.5 L1511.5,675.2 L1512.2,672.0 L1513.0,669.0 L1513.8,666.2 L1514.5,663.6 L1515.2,661.3 L1516.0,659.3 L1516.8,657.5 L1517.5,656.0 L1518.2,654.8 L1519.0,654.0 L1519.8,653.5 L1520.5,653.3 L1521.2,653.4 L1522.0,653.9 L1522.8,654.6 L1523.5,655.6 L1524.2,656.9 L1525.0,658.4 L1525.8,660.1 L1526.5,662.1 L1527.2,664.3 L1528.0,666.7 L1528.8,669.3 L1529.5,672.1 L1530.2,675.0 L1531.0,678.1 L1531.8,681.3 L1532.5,684.7M1565.5,864.1 L1566.2,867.5 L1567.0,870.7 L1567.8,873.8 L1568.5,876.7 L1569.2,879.5 L1570.0,882.1 L1570.8,884.5 L1571.5,886.7 L1572.2,888.7 L1573.0,890.4 L1573.8,891.9 L1574.5,893.2 L1575.2,894.2 L1576.0,894.9 L1576.8,895.4 L1577.5,895.5 L1578.2,895.4 L1579.0,894.9 L1579.8,894.2 L1580.5,893.2 L1581.2,892.0 L1582.0,890.5 L1582.8,888.7 L1583.5,886.8 L1584.2,884.6 L1585.0,882.2 L1585.8,879.6 L1586.5,876.8 L1587.2,873.9 L1588.0,870.8 L1588.8,867.6 L1589.5,864.3M1622.5,684.7 L1623.2,681.4 L1624.0,678.2 L1624.8,675.1 L1625.5,672.2 L1626.2,669.5 L1627.0,666.9 L1627.8,664.5 L1628.5,662.4 L1629.2,660.4 L1630.0,658.7 L1630.8,657.2 L1631.5,656.0 L1632.2,655.0 L1633.0,654.3 L1633.8,653.9 L1634.5,653.7 L1635.2,653.9 L1636.0,654.3 L1636.8,654.9 L1637.5,655.8 L1638.2,657.0 L1639.0,658.4 L1639.8,660.0 L1640.5,661.8 L1641.2,663.9 L1642.0,666.1 L1642.8,668.5 L1643.5,671.1 L1644.2,673.8 L1645.0,676.7 L1645.8,679.7 L1646.5,682.8 L1647.2,686.1M1681.0,864.0 L1681.8,867.2 L1682.5,870.3 L1683.2,873.3 L1684.0,876.1 L1684.8,878.8 L1685.5,881.3 L1686.2,883.6 L1687.0,885.8 L1687.8,887.7 L1688.5,889.4 L1689.2,891.0 L1690.0,892.3 L1690.8,893.3 L1691.5,894.1 L1692.2,894.7 L1693.0,895.0" fill="none" stroke="#8cbc10" stroke-width="2.1" stroke-linecap="round" stroke-linejoin="round"/>
<path d="M25.8,872.6 L26.5,877.4 L27.2,880.2 L28.0,880.5 L28.8,878.5 L29.5,874.7M51.2,669.3 L52.0,665.0 L52.8,662.3 L53.5,661.8 L54.2,663.5 L55.0,667.0 L55.8,671.9M76.8,872.3 L77.5,876.9 L78.2,880.0 L79.0,881.1 L79.8,880.1 L80.5,877.1 L81.2,872.7M103.0,669.6 L103.8,665.1 L104.5,662.0 L105.2,660.8 L106.0,661.7 L106.8,664.6 L107.5,669.0M129.2,874.3 L130.0,878.4 L130.8,881.0 L131.5,881.5 L132.2,880.0 L133.0,876.8 L133.8,872.3M156.2,666.6 L157.0,662.8 L157.8,660.4 L158.5,659.9 L159.2,661.4 L160.0,664.7 L160.8,669.2M182.5,872.3 L183.2,876.9 L184.0,880.3 L184.8,881.9 L185.5,881.6 L186.2,879.4 L187.0,875.8 L187.8,871.0M210.2,665.4 L211.0,661.7 L211.8,659.4 L212.5,659.0 L213.2,660.5 L214.0,663.7 L214.8,668.2M236.5,872.9 L237.2,877.4 L238.0,880.7 L238.8,882.4 L239.5,882.1 L240.2,880.1 L241.0,876.6 L241.8,872.1M264.2,668.4 L265.0,663.8 L265.8,660.4 L266.5,658.3 L267.2,658.0 L268.0,659.5 L268.8,662.6 L269.5,666.8M292.0,872.8 L292.8,877.3 L293.5,880.7 L294.2,882.6 L295.0,882.8 L295.8,881.3 L296.5,878.4 L297.2,874.3M320.5,667.2 L321.2,662.8 L322.0,659.4 L322.8,657.4 L323.5,657.0 L324.2,658.2 L325.0,660.9 L325.8,664.7M349.8,875.2 L350.5,879.1 L351.2,882.0 L352.0,883.4 L352.8,883.2 L353.5,881.5 L354.2,878.5 L355.0,874.3M379.0,662.9 L379.8,659.3 L380.5,656.9 L381.2,656.0 L382.0,656.7 L382.8,658.9 L383.5,662.4 L384.2,666.9M407.5,876.0 L408.2,880.0 L409.0,882.7 L409.8,884.0 L410.5,883.8 L411.2,882.1 L412.0,879.2 L412.8,875.3M437.5,662.5 L438.2,658.9 L439.0,656.4 L439.8,655.1 L440.5,655.4 L441.2,657.0 L442.0,659.9 L442.8,663.8M467.5,877.4 L468.2,881.0 L469.0,883.5 L469.8,884.7 L470.5,884.4 L471.2,882.9 L472.0,880.2 L472.8,876.6M498.2,662.3 L499.0,658.6 L499.8,655.9 L500.5,654.4 L501.2,654.2 L502.0,655.3 L502.8,657.8 L503.5,661.3M528.2,876.7 L529.0,880.6 L529.8,883.4 L530.5,885.0 L531.2,885.3 L532.0,884.3 L532.8,882.1 L533.5,879.0 L534.2,875.1M559.8,663.4 L560.5,659.5 L561.2,656.3 L562.0,654.2 L562.8,653.2 L563.5,653.4 L564.2,654.8 L565.0,657.4 L565.8,660.9M591.2,876.5 L592.0,880.4 L592.8,883.4 L593.5,885.3 L594.2,886.0 L595.0,885.5 L595.8,883.8 L596.5,881.2 L597.2,877.7M623.5,661.7 L624.2,657.9 L625.0,655.0 L625.8,653.0 L626.5,652.1 L627.2,652.4 L628.0,653.8 L628.8,656.4 L629.5,659.9M655.0,875.3 L655.8,879.3 L656.5,882.5 L657.2,884.7 L658.0,885.7 L658.8,885.7 L659.5,884.5 L660.2,882.4 L661.0,879.5 L661.8,875.9M688.8,661.6 L689.5,657.9 L690.2,654.9 L691.0,652.7 L691.8,651.4 L692.5,651.2 L693.2,652.0 L694.0,653.8 L694.8,656.5 L695.5,660.0M722.5,876.9 L723.2,880.3 L724.0,883.0 L724.8,884.8 L725.5,885.6 L726.2,885.4 L727.0,884.3 L727.8,882.2 L728.5,879.4 L729.2,875.9M757.0,660.8 L757.8,657.2 L758.5,654.2 L759.2,652.0 L760.0,650.7 L760.8,650.2 L761.5,650.8 L762.2,652.3 L763.0,654.7 L763.8,657.8 L764.5,661.6M791.5,875.8 L792.2,879.3 L793.0,882.2 L793.8,884.2 L794.5,885.3 L795.2,885.5 L796.0,884.7 L796.8,883.0 L797.5,880.5 L798.2,877.4M826.8,657.4 L827.5,654.3 L828.2,651.8 L829.0,650.1 L829.8,649.4 L830.5,649.5 L831.2,650.5 L832.0,652.4 L832.8,655.0 L833.5,658.3M862.0,876.4 L862.8,879.9 L863.5,882.6 L864.2,884.7 L865.0,885.9 L865.8,886.3 L866.5,885.9 L867.2,884.6 L868.0,882.6 L868.8,879.8 L869.5,876.5M898.8,658.0 L899.5,654.9 L900.2,652.4 L901.0,650.6 L901.8,649.6 L902.5,649.4 L903.2,650.0 L904.0,651.3 L904.8,653.4 L905.5,656.1 L906.2,659.3M936.2,878.3 L937.0,881.4 L937.8,883.9 L938.5,885.7 L939.2,886.9 L940.0,887.3 L940.8,886.9 L941.5,885.7 L942.2,883.9 L943.0,881.3 L943.8,878.2M973.0,661.1 L973.8,657.6 L974.5,654.6 L975.2,652.3 L976.0,650.6 L976.8,649.6 L977.5,649.5 L978.2,649.9 L979.0,651.1 L979.8,652.8 L980.5,655.0 L981.2,657.8 L982.0,661.0M1013.5,876.3 L1014.2,879.5 L1015.0,882.3 L1015.8,884.7 L1016.5,886.4 L1017.2,887.6 L1018.0,888.2 L1018.8,888.1 L1019.5,887.3 L1020.2,885.8 L1021.0,883.6 L1021.8,880.8 L1022.5,877.4M1051.8,660.5 L1052.5,657.2 L1053.2,654.3 L1054.0,652.1 L1054.8,650.5 L1055.5,649.7 L1056.2,649.5 L1057.0,650.0 L1057.8,651.0 L1058.5,652.5 L1059.2,654.5 L1060.0,656.9 L1060.8,659.7M1095.2,878.6 L1096.0,881.4 L1096.8,883.7 L1097.5,885.7 L1098.2,887.2 L1099.0,888.2 L1099.8,888.6 L1100.5,888.5 L1101.2,887.7 L1102.0,886.2 L1102.8,884.0 L1103.5,881.3 L1104.2,878.1M1134.2,660.4 L1135.0,657.3 L1135.8,654.8 L1136.5,652.9 L1137.2,651.6 L1138.0,651.0 L1138.8,651.0 L1139.5,651.5 L1140.2,652.5 L1141.0,653.8 L1141.8,655.6 L1142.5,657.7 L1143.2,660.2M1180.8,879.2 L1181.5,881.7 L1182.2,883.9 L1183.0,885.7 L1183.8,887.2 L1184.5,888.2 L1185.2,888.8 L1186.0,889.0 L1186.8,888.6 L1187.5,887.6 L1188.2,886.0 L1189.0,883.8 L1189.8,881.0 L1190.5,877.8M1220.5,662.5 L1221.2,659.4 L1222.0,656.9 L1222.8,654.8 L1223.5,653.4 L1224.2,652.6 L1225.0,652.4 L1225.8,652.8 L1226.5,653.5 L1227.2,654.7 L1228.0,656.3 L1228.8,658.2 L1229.5,660.5 L1230.2,663.0M1267.8,884.0 L1268.5,886.8 L1269.2,889.2 L1270.0,891.3 L1270.8,893.0 L1271.5,894.4 L1272.2,895.4 L1273.0,895.9 L1273.8,896.0 L1274.5,895.6 L1275.2,894.6 L1276.0,893.2 L1276.8,891.3 L1277.5,889.0 L1278.2,886.2M1312.0,666.9 L1312.8,664.0 L1313.5,661.5 L1314.2,659.3 L1315.0,657.6 L1315.8,656.4 L1316.5,655.7 L1317.2,655.5 L1318.0,655.7 L1318.8,656.3 L1319.5,657.4 L1320.2,658.7 L1321.0,660.5 L1321.8,662.6 L1322.5,665.0M1360.8,886.8 L1361.5,889.4 L1362.2,891.7 L1363.0,893.6 L1363.8,895.3 L1364.5,896.5 L1365.2,897.4 L1366.0,897.9 L1366.8,897.9 L1367.5,897.6 L1368.2,896.8 L1369.0,895.7 L1369.8,894.2 L1370.5,892.3 L1371.2,890.2 L1372.0,887.7M1410.2,665.3 L1411.0,662.7 L1411.8,660.4 L1412.5,658.5 L1413.2,656.8 L1414.0,655.6 L1414.8,654.7 L1415.5,654.1 L1416.2,654.0 L1417.0,654.3 L1417.8,654.9 L1418.5,655.8 L1419.2,657.1 L1420.0,658.7 L1420.8,660.6 L1421.5,662.8 L1422.2,665.2M1462.0,883.6 L1462.8,886.0 L1463.5,888.1 L1464.2,889.9 L1465.0,891.3 L1465.8,892.5 L1466.5,893.4 L1467.2,893.9 L1468.0,894.0 L1468.8,893.8 L1469.5,893.3 L1470.2,892.5 L1471.0,891.3 L1471.8,889.9 L1472.5,888.1 L1473.2,886.0 L1474.0,883.7M1514.5,663.6 L1515.2,661.3 L1516.0,659.3 L1516.8,657.5 L1517.5,656.0 L1518.2,654.8 L1519.0,654.0 L1519.8,653.5 L1520.5,653.3 L1521.2,653.4 L1522.0,653.9 L1522.8,654.6 L1523.5,655.6 L1524.2,656.9 L1525.0,658.4 L1525.8,660.1 L1526.5,662.1 L1527.2,664.3M1570.8,884.5 L1571.5,886.7 L1572.2,888.7 L1573.0,890.4 L1573.8,891.9 L1574.5,893.2 L1575.2,894.2 L1576.0,894.9 L1576.8,895.4 L1577.5,895.5 L1578.2,895.4 L1579.0,894.9 L1579.8,894.2 L1580.5,893.2 L1581.2,892.0 L1582.0,890.5 L1582.8,888.7 L1583.5,886.8 L1584.2,884.6M1627.8,664.5 L1628.5,662.4 L1629.2,660.4 L1630.0,658.7 L1630.8,657.2 L1631.5,656.0 L1632.2,655.0 L1633.0,654.3 L1633.8,653.9 L1634.5,653.7 L1635.2,653.9 L1636.0,654.3 L1636.8,654.9 L1637.5,655.8 L1638.2,657.0 L1639.0,658.4 L1639.8,660.0 L1640.5,661.8 L1641.2,663.9M1686.2,883.6 L1687.0,885.8 L1687.8,887.7 L1688.5,889.4 L1689.2,891.0 L1690.0,892.3 L1690.8,893.3 L1691.5,894.1 L1692.2,894.7 L1693.0,895.0" fill="none" stroke="#b0ea18" stroke-width="2.6" stroke-linecap="round" stroke-linejoin="round"/>
</g>
<path d="M36,371.5h1M36,456.5h1M36,541.5h1M36,710.5h1M36,795.5h1M36,880.5h1M70,371.5h1M70,456.5h1M70,541.5h1M70,710.5h1M70,795.5h1M70,880.5h1M104,371.5h1M104,456.5h1M104,541.5h1M104,710.5h1M104,795.5h1M104,880.5h1M138,371.5h1M138,456.5h1M138,541.5h1M138,710.5h1M138,795.5h1M138,880.5h1M172,303.5h1M172,320.5h1M172,337.5h1M172,354.5h1M172,371.5h1M172,388.5h1M172,405.5h1M172,422.5h1M172,439.5h1M172,456.5h1M172,473.5h1M172,490.5h1M172,507.5h1M172,524.5h1M172,541.5h1M172,558.5h1M172,575.5h1M172,592.5h1M172,609.5h1M172,626.5h1M172,643.5h1M172,660.5h1M172,676.5h1M172,693.5h1M172,710.5h1M172,727.5h1M172,744.5h1M172,761.5h1M172,778.5h1M172,795.5h1M172,812.5h1M172,829.5h1M172,846.5h1M172,863.5h1M172,880.5h1M172,897.5h1M172,914.5h1M172,931.5h1M172,948.5h1M205,371.5h1M205,456.5h1M205,541.5h1M205,710.5h1M205,795.5h1M205,880.5h1M239,371.5h1M239,456.5h1M239,541.5h1M239,710.5h1M239,795.5h1M239,880.5h1M273,371.5h1M273,456.5h1M273,541.5h1M273,710.5h1M273,795.5h1M273,880.5h1M307,371.5h1M307,456.5h1M307,541.5h1M307,710.5h1M307,795.5h1M307,880.5h1M341,303.5h1M341,320.5h1M341,337.5h1M341,354.5h1M341,371.5h1M341,388.5h1M341,405.5h1M341,422.5h1M341,439.5h1M341,456.5h1M341,473.5h1M341,490.5h1M341,507.5h1M341,524.5h1M341,541.5h1M341,558.5h1M341,575.5h1M341,592.5h1M341,609.5h1M341,626.5h1M341,643.5h1M341,660.5h1M341,676.5h1M341,693.5h1M341,710.5h1M341,727.5h1M341,744.5h1M341,761.5h1M341,778.5h1M341,795.5h1M341,812.5h1M341,829.5h1M341,846.5h1M341,863.5h1M341,880.5h1M341,897.5h1M341,914.5h1M341,931.5h1M341,948.5h1M374,371.5h1M374,456.5h1M374,541.5h1M374,710.5h1M374,795.5h1M374,880.5h1M408,371.5h1M408,456.5h1M408,541.5h1M408,710.5h1M408,795.5h1M408,880.5h1M442,371.5h1M442,456.5h1M442,541.5h1M442,710.5h1M442,795.5h1M442,880.5h1M476,371.5h1M476,456.5h1M476,541.5h1M476,710.5h1M476,795.5h1M476,880.5h1M510,303.5h1M510,320.5h1M510,337.5h1M510,354.5h1M510,371.5h1M510,388.5h1M510,405.5h1M510,422.5h1M510,439.5h1M510,456.5h1M510,473.5h1M510,490.5h1M510,507.5h1M510,524.5h1M510,541.5h1M510,558.5h1M510,575.5h1M510,592.5h1M510,609.5h1M510,626.5h1M510,643.5h1M510,660.5h1M510,676.5h1M510,693.5h1M510,710.5h1M510,727.5h1M510,744.5h1M510,761.5h1M510,778.5h1M510,795.5h1M510,812.5h1M510,829.5h1M510,846.5h1M510,863.5h1M510,880.5h1M510,897.5h1M510,914.5h1M510,931.5h1M510,948.5h1M543,371.5h1M543,456.5h1M543,541.5h1M543,710.5h1M543,795.5h1M543,880.5h1M577,371.5h1M577,456.5h1M577,541.5h1M577,710.5h1M577,795.5h1M577,880.5h1M611,371.5h1M611,456.5h1M611,541.5h1M611,710.5h1M611,795.5h1M611,880.5h1M645,371.5h1M645,456.5h1M645,541.5h1M645,710.5h1M645,795.5h1M645,880.5h1M679,303.5h1M679,320.5h1M679,337.5h1M679,354.5h1M679,371.5h1M679,388.5h1M679,405.5h1M679,422.5h1M679,439.5h1M679,456.5h1M679,473.5h1M679,490.5h1M679,507.5h1M679,524.5h1M679,541.5h1M679,558.5h1M679,575.5h1M679,592.5h1M679,609.5h1M679,626.5h1M679,643.5h1M679,660.5h1M679,676.5h1M679,693.5h1M679,710.5h1M679,727.5h1M679,744.5h1M679,761.5h1M679,778.5h1M679,795.5h1M679,812.5h1M679,829.5h1M679,846.5h1M679,863.5h1M679,880.5h1M679,897.5h1M679,914.5h1M679,931.5h1M679,948.5h1M712,371.5h1M712,456.5h1M712,541.5h1M712,710.5h1M712,795.5h1M712,880.5h1M746,371.5h1M746,456.5h1M746,541.5h1M746,710.5h1M746,795.5h1M746,880.5h1M780,371.5h1M780,456.5h1M780,541.5h1M780,710.5h1M780,795.5h1M780,880.5h1M814,371.5h1M814,456.5h1M814,541.5h1M814,710.5h1M814,795.5h1M814,880.5h1M848,371.5h1M848,456.5h1M848,541.5h1M848,710.5h1M848,795.5h1M848,880.5h1M881,371.5h1M881,456.5h1M881,541.5h1M881,710.5h1M881,795.5h1M881,880.5h1M915,371.5h1M915,456.5h1M915,541.5h1M915,710.5h1M915,795.5h1M915,880.5h1M949,371.5h1M949,456.5h1M949,541.5h1M949,710.5h1M949,795.5h1M949,880.5h1M983,371.5h1M983,456.5h1M983,541.5h1M983,710.5h1M983,795.5h1M983,880.5h1M1017,303.5h1M1017,320.5h1M1017,337.5h1M1017,354.5h1M1017,371.5h1M1017,388.5h1M1017,405.5h1M1017,422.5h1M1017,439.5h1M1017,456.5h1M1017,473.5h1M1017,490.5h1M1017,507.5h1M1017,524.5h1M1017,541.5h1M1017,558.5h1M1017,575.5h1M1017,592.5h1M1017,609.5h1M1017,626.5h1M1017,643.5h1M1017,660.5h1M1017,676.5h1M1017,693.5h1M1017,710.5h1M1017,727.5h1M1017,744.5h1M1017,761.5h1M1017,778.5h1M1017,795.5h1M1017,812.5h1M1017,829.5h1M1017,846.5h1M1017,863.5h1M1017,880.5h1M1017,897.5h1M1017,914.5h1M1017,931.5h1M1017,948.5h1M1050,371.5h1M1050,456.5h1M1050,541.5h1M1050,710.5h1M1050,795.5h1M1050,880.5h1M1084,371.5h1M1084,456.5h1M1084,541.5h1M1084,710.5h1M1084,795.5h1M1084,880.5h1M1118,371.5h1M1118,456.5h1M1118,541.5h1M1118,710.5h1M1118,795.5h1M1118,880.5h1M1152,371.5h1M1152,456.5h1M1152,541.5h1M1152,710.5h1M1152,795.5h1M1152,880.5h1M1186,303.5h1M1186,320.5h1M1186,337.5h1M1186,354.5h1M1186,371.5h1M1186,388.5h1M1186,405.5h1M1186,422.5h1M1186,439.5h1M1186,456.5h1M1186,473.5h1M1186,490.5h1M1186,507.5h1M1186,524.5h1M1186,541.5h1M1186,558.5h1M1186,575.5h1M1186,592.5h1M1186,609.5h1M1186,626.5h1M1186,643.5h1M1186,660.5h1M1186,676.5h1M1186,693.5h1M1186,710.5h1M1186,727.5h1M1186,744.5h1M1186,761.5h1M1186,778.5h1M1186,795.5h1M1186,812.5h1M1186,829.5h1M1186,846.5h1M1186,863.5h1M1186,880.5h1M1186,897.5h1M1186,914.5h1M1186,931.5h1M1186,948.5h1M1219,371.5h1M1219,456.5h1M1219,541.5h1M1219,710.5h1M1219,795.5h1M1219,880.5h1M1253,371.5h1M1253,456.5h1M1253,541.5h1M1253,710.5h1M1253,795.5h1M1253,880.5h1M1287,371.5h1M1287,456.5h1M1287,541.5h1M1287,710.5h1M1287,795.5h1M1287,880.5h1M1321,371.5h1M1321,456.5h1M1321,541.5h1M1321,710.5h1M1321,795.5h1M1321,880.5h1M1355,303.5h1M1355,320.5h1M1355,337.5h1M1355,354.5h1M1355,371.5h1M1355,388.5h1M1355,405.5h1M1355,422.5h1M1355,439.5h1M1355,456.5h1M1355,473.5h1M1355,490.5h1M1355,507.5h1M1355,524.5h1M1355,541.5h1M1355,558.5h1M1355,575.5h1M1355,592.5h1M1355,609.5h1M1355,626.5h1M1355,643.5h1M1355,660.5h1M1355,676.5h1M1355,693.5h1M1355,710.5h1M1355,727.5h1M1355,744.5h1M1355,761.5h1M1355,778.5h1M1355,795.5h1M1355,812.5h1M1355,829.5h1M1355,846.5h1M1355,863.5h1M1355,880.5h1M1355,897.5h1M1355,914.5h1M1355,931.5h1M1355,948.5h1M1388,371.5h1M1388,456.5h1M1388,541.5h1M1388,710.5h1M1388,795.5h1M1388,880.5h1M1422,371.5h1M1422,456.5h1M1422,541.5h1M1422,710.5h1M1422,795.5h1M1422,880.5h1M1456,371.5h1M1456,456.5h1M1456,541.5h1M1456,710.5h1M1456,795.5h1M1456,880.5h1M1490,371.5h1M1490,456.5h1M1490,541.5h1M1490,710.5h1M1490,795.5h1M1490,880.5h1M1524,303.5h1M1524,320.5h1M1524,337.5h1M1524,354.5h1M1524,371.5h1M1524,388.5h1M1524,405.5h1M1524,422.5h1M1524,439.5h1M1524,456.5h1M1524,473.5h1M1524,490.5h1M1524,507.5h1M1524,524.5h1M1524,541.5h1M1524,558.5h1M1524,575.5h1M1524,592.5h1M1524,609.5h1M1524,626.5h1M1524,643.5h1M1524,660.5h1M1524,676.5h1M1524,693.5h1M1524,710.5h1M1524,727.5h1M1524,744.5h1M1524,761.5h1M1524,778.5h1M1524,795.5h1M1524,812.5h1M1524,829.5h1M1524,846.5h1M1524,863.5h1M1524,880.5h1M1524,897.5h1M1524,914.5h1M1524,931.5h1M1524,948.5h1M1557,371.5h1M1557,456.5h1M1557,541.5h1M1557,710.5h1M1557,795.5h1M1557,880.5h1M1591,371.5h1M1591,456.5h1M1591,541.5h1M1591,710.5h1M1591,795.5h1M1591,880.5h1M1625,371.5h1M1625,456.5h1M1625,541.5h1M1625,710.5h1M1625,795.5h1M1625,880.5h1M1659,371.5h1M1659,456.5h1M1659,541.5h1M1659,710.5h1M1659,795.5h1M1659,880.5h1" stroke="#a4aecb" stroke-width="1" fill="none"/>
<line x1="3" y1="626.5" x2="1694" y2="626.5" stroke="#aab4d2" stroke-width="1" stroke-dasharray="1 1" opacity="0.9"/>
<line x1="848.5" y1="287" x2="848.5" y2="965" stroke="#aab4d2" stroke-width="1" stroke-dasharray="1 1" opacity="0.9"/>
<path d="M36.5,623.0v7.0M36.5,287.5v2.5M36.5,961.5v2.5M70.5,623.0v7.0M70.5,287.5v2.5M70.5,961.5v2.5M104.5,623.0v7.0M104.5,287.5v2.5M104.5,961.5v2.5M138.5,623.0v7.0M138.5,287.5v2.5M138.5,961.5v2.5M172.5,623.0v7.0M172.5,287.5v5.0M172.5,959.0v5.0M205.5,623.0v7.0M205.5,287.5v2.5M205.5,961.5v2.5M239.5,623.0v7.0M239.5,287.5v2.5M239.5,961.5v2.5M273.5,623.0v7.0M273.5,287.5v2.5M273.5,961.5v2.5M307.5,623.0v7.0M307.5,287.5v2.5M307.5,961.5v2.5M341.5,623.0v7.0M341.5,287.5v5.0M341.5,959.0v5.0M374.5,623.0v7.0M374.5,287.5v2.5M374.5,961.5v2.5M408.5,623.0v7.0M408.5,287.5v2.5M408.5,961.5v2.5M442.5,623.0v7.0M442.5,287.5v2.5M442.5,961.5v2.5M476.5,623.0v7.0M476.5,287.5v2.5M476.5,961.5v2.5M510.5,623.0v7.0M510.5,287.5v5.0M510.5,959.0v5.0M543.5,623.0v7.0M543.5,287.5v2.5M543.5,961.5v2.5M577.5,623.0v7.0M577.5,287.5v2.5M577.5,961.5v2.5M611.5,623.0v7.0M611.5,287.5v2.5M611.5,961.5v2.5M645.5,623.0v7.0M645.5,287.5v2.5M645.5,961.5v2.5M679.5,623.0v7.0M679.5,287.5v5.0M679.5,959.0v5.0M712.5,623.0v7.0M712.5,287.5v2.5M712.5,961.5v2.5M746.5,623.0v7.0M746.5,287.5v2.5M746.5,961.5v2.5M780.5,623.0v7.0M780.5,287.5v2.5M780.5,961.5v2.5M814.5,623.0v7.0M814.5,287.5v2.5M814.5,961.5v2.5M848.5,623.0v7.0M848.5,287.5v5.0M848.5,959.0v5.0M881.5,623.0v7.0M881.5,287.5v2.5M881.5,961.5v2.5M915.5,623.0v7.0M915.5,287.5v2.5M915.5,961.5v2.5M949.5,623.0v7.0M949.5,287.5v2.5M949.5,961.5v2.5M983.5,623.0v7.0M983.5,287.5v2.5M983.5,961.5v2.5M1017.5,623.0v7.0M1017.5,287.5v5.0M1017.5,959.0v5.0M1050.5,623.0v7.0M1050.5,287.5v2.5M1050.5,961.5v2.5M1084.5,623.0v7.0M1084.5,287.5v2.5M1084.5,961.5v2.5M1118.5,623.0v7.0M1118.5,287.5v2.5M1118.5,961.5v2.5M1152.5,623.0v7.0M1152.5,287.5v2.5M1152.5,961.5v2.5M1186.5,623.0v7.0M1186.5,287.5v5.0M1186.5,959.0v5.0M1219.5,623.0v7.0M1219.5,287.5v2.5M1219.5,961.5v2.5M1253.5,623.0v7.0M1253.5,287.5v2.5M1253.5,961.5v2.5M1287.5,623.0v7.0M1287.5,287.5v2.5M1287.5,961.5v2.5M1321.5,623.0v7.0M1321.5,287.5v2.5M1321.5,961.5v2.5M1355.5,623.0v7.0M1355.5,287.5v5.0M1355.5,959.0v5.0M1388.5,623.0v7.0M1388.5,287.5v2.5M1388.5,961.5v2.5M1422.5,623.0v7.0M1422.5,287.5v2.5M1422.5,961.5v2.5M1456.5,623.0v7.0M1456.5,287.5v2.5M1456.5,961.5v2.5M1490.5,623.0v7.0M1490.5,287.5v2.5M1490.5,961.5v2.5M1524.5,623.0v7.0M1524.5,287.5v5.0M1524.5,959.0v5.0M1557.5,623.0v7.0M1557.5,287.5v2.5M1557.5,961.5v2.5M1591.5,623.0v7.0M1591.5,287.5v2.5M1591.5,961.5v2.5M1625.5,623.0v7.0M1625.5,287.5v2.5M1625.5,961.5v2.5M1659.5,623.0v7.0M1659.5,287.5v2.5M1659.5,961.5v2.5M845.0,303.5h7.0M3.0,303.5h2.0M1691.0,303.5h2.0M845.0,320.5h7.0M3.0,320.5h2.0M1691.0,320.5h2.0M845.0,337.5h7.0M3.0,337.5h2.0M1691.0,337.5h2.0M845.0,354.5h7.0M3.0,354.5h2.0M1691.0,354.5h2.0M843.0,371.5h11.0M3.0,371.5h5.0M1688.0,371.5h5.0M845.0,388.5h7.0M3.0,388.5h2.0M1691.0,388.5h2.0M845.0,405.5h7.0M3.0,405.5h2.0M1691.0,405.5h2.0M845.0,422.5h7.0M3.0,422.5h2.0M1691.0,422.5h2.0M845.0,439.5h7.0M3.0,439.5h2.0M1691.0,439.5h2.0M843.0,456.5h11.0M3.0,456.5h5.0M1688.0,456.5h5.0M845.0,473.5h7.0M3.0,473.5h2.0M1691.0,473.5h2.0M845.0,490.5h7.0M3.0,490.5h2.0M1691.0,490.5h2.0M845.0,507.5h7.0M3.0,507.5h2.0M1691.0,507.5h2.0M845.0,524.5h7.0M3.0,524.5h2.0M1691.0,524.5h2.0M843.0,541.5h11.0M3.0,541.5h5.0M1688.0,541.5h5.0M845.0,558.5h7.0M3.0,558.5h2.0M1691.0,558.5h2.0M845.0,575.5h7.0M3.0,575.5h2.0M1691.0,575.5h2.0M845.0,592.5h7.0M3.0,592.5h2.0M1691.0,592.5h2.0M845.0,609.5h7.0M3.0,609.5h2.0M1691.0,609.5h2.0M843.0,626.5h11.0M3.0,626.5h5.0M1688.0,626.5h5.0M845.0,643.5h7.0M3.0,643.5h2.0M1691.0,643.5h2.0M845.0,660.5h7.0M3.0,660.5h2.0M1691.0,660.5h2.0M845.0,676.5h7.0M3.0,676.5h2.0M1691.0,676.5h2.0M845.0,693.5h7.0M3.0,693.5h2.0M1691.0,693.5h2.0M843.0,710.5h11.0M3.0,710.5h5.0M1688.0,710.5h5.0M845.0,727.5h7.0M3.0,727.5h2.0M1691.0,727.5h2.0M845.0,744.5h7.0M3.0,744.5h2.0M1691.0,744.5h2.0M845.0,761.5h7.0M3.0,761.5h2.0M1691.0,761.5h2.0M845.0,778.5h7.0M3.0,778.5h2.0M1691.0,778.5h2.0M843.0,795.5h11.0M3.0,795.5h5.0M1688.0,795.5h5.0M845.0,812.5h7.0M3.0,812.5h2.0M1691.0,812.5h2.0M845.0,829.5h7.0M3.0,829.5h2.0M1691.0,829.5h2.0M845.0,846.5h7.0M3.0,846.5h2.0M1691.0,846.5h2.0M845.0,863.5h7.0M3.0,863.5h2.0M1691.0,863.5h2.0M843.0,880.5h11.0M3.0,880.5h5.0M1688.0,880.5h5.0M845.0,897.5h7.0M3.0,897.5h2.0M1691.0,897.5h2.0M845.0,914.5h7.0M3.0,914.5h2.0M1691.0,914.5h2.0M845.0,931.5h7.0M3.0,931.5h2.0M1691.0,931.5h2.0M845.0,948.5h7.0M3.0,948.5h2.0M1691.0,948.5h2.0" stroke="#aab4d2" stroke-width="1" fill="none" opacity="0.9"/>
<line x1="842.5" y1="626.5" x2="854.5" y2="626.5" stroke="#aab4d2" stroke-width="1.4"/>
<polygon points="5.8,472.9 40.8,472.9 54.4,488.9 40.8,504.9 5.8,504.9" fill="#da5c8c" stroke="#000" stroke-width="1"/>
<text x="12.2" y="496.09999999999997" font-size="21" textLength="21.5" lengthAdjust="spacingAndGlyphs" fill="#0a0a0a" font-family="Liberation Sans,sans-serif">C3</text>
<polygon points="6.8,760.7 40.3,760.7 53.2,776 40.3,791.3 6.8,791.3" fill="#020502" stroke="#8cc800" stroke-width="2"/>
<text x="12.2" y="783.3" font-size="21.5" textLength="23.5" lengthAdjust="spacingAndGlyphs" fill="#8cc800" font-family="Liberation Sans,sans-serif">C4</text></svg>
<div class="t" style="top:260.3px;left:11.5px;font-size:20.34px;color:#111;"><span class="c" style="margin-right:-0.36em">水平缩放标度</span>:</div>
<div class="a" style="left:266px;top:261px;width:175px;height:24px;border-radius:9px;background:#aec4e6;border:1px solid #5f6674;"></div>
<div class="a" style="left:278px;top:263px;width:19px;height:19px;border-radius:10px;background:#2b8fdc;color:#fff;font-weight:bold;font-size:16px;line-height:19px;text-align:center;">A</div>
<div class="t" style="top:260.3px;left:316.5px;font-size:20px;letter-spacing:0.60px;color:#111;">20.0 ms/<span class="c" style="margin-right:-0.06em">格</span></div>
<div class="btn" style="left:484px;top:261px;width:76px;height:24px;border-radius:9px;font-size:20px;line-height:25px;padding-left:1px;">+</div>
<div class="btn" style="left:603px;top:261px;width:76px;height:24px;border-radius:9px;font-size:20px;line-height:19px;">-</div>
<div class="t" style="top:260.3px;left:720.0px;font-size:20px;letter-spacing:0.50px;color:#111;">(100x <span class="c" style="margin-right:-0.12em">缩放</span>)</div>
<div class="t" style="top:260.3px;left:1116.0px;font-size:20.51px;color:#111;"><span class="c" style="margin-right:-0.24em">缩放位置</span>:</div>
<div class="a" style="left:1296px;top:261px;width:164px;height:24px;border-radius:9px;background:#aec4e6;border:1px solid #5f6674;"></div>
<div class="a" style="left:1308px;top:263px;width:19px;height:19px;border-radius:10px;background:#2b8fdc;color:#fff;font-weight:bold;font-size:16px;line-height:19px;text-align:center;">B</div>
<div class="t" style="top:260.3px;left:1356.8px;font-size:20px;letter-spacing:0.17px;color:#111;">86.760 %</div>
<div class="a" style="left:1608px;top:261px;width:76px;height:24px;border-radius:9px;border:1px solid #7a819b;"></div>
<div class="t" style="top:261px;left:1645.4px;font-size:21.67px;color:#e4e6ec;">X</div>
<div class="a" style="left:1727px;top:30px;width:1px;height:938px;background:#5c5c5a;"></div>
<div class="a" style="left:1727px;top:967px;width:193px;height:1px;background:#5c5c5a;"></div>
<div class="a" style="left:1727px;top:30px;width:193px;height:1px;background:#5c5c5a;"></div>
<div class="a" style="left:1733px;top:171px;width:182px;height:1px;background:#5c5c5a;"></div>
<div class="btn" style="left:1733px;top:36px;width:86px;height:60px;"></div>
<div class="t" style="top:53.5px;left:1757.3px;font-size:20.56px;color:#e4e6ec;"><span class="c" style="margin-right:-0.12em">光标</span></div>
<div class="btn" style="left:1829px;top:36px;width:86px;height:60px;"></div>
<div class="t" style="top:53.5px;left:1854.0px;font-size:20.39px;color:#e4e6ec;"><span class="c" style="margin-right:-0.12em">测量</span></div>
<div class="btn" style="left:1733px;top:106px;width:86px;height:60px;"></div>
<div class="t" style="top:123.5px;left:1759.0px;font-size:20.80px;color:#e4e6ec;"><span class="c" style="margin-right:-0.12em">搜索</span></div>
<div class="btn" style="left:1829px;top:106px;width:86px;height:60px;"></div>
<div class="t" style="top:110.5px;left:1854.4px;font-size:20.44px;color:#e4e6ec;"><span class="c" style="margin-right:-0.12em">结果</span></div>
<div class="t" style="top:135px;left:1864.8px;font-size:20.71px;color:#e4e6ec;"><span class="c" style="margin-right:-0.06em">表</span></div>
<div class="badge" style="left:1733px;top:178px;width:182px;height:80px;"><div class="h" style="height:26px;background:#cfe2f6"></div><div class="chip" style="left:136px;top:3px;width:35px;height:20px;"></div></div>
<div class="t" style="top:179px;left:1740.8px;font-size:20px;letter-spacing:-1.60px;color:#111;"><span class="c" style="margin-right:-0.12em">测量</span> 1</div>
<div class="t" style="top:179.5px;left:1881.0px;font-size:20.67px;color:#111;text-shadow:0.4px 0 0 #111;">4</div>
<div class="t" style="top:204px;left:1744.6px;font-size:20.44px;color:#111;"><span class="c" style="margin-right:-0.12em">频率</span></div>
<div class="t" style="top:229px;left:1742.8px;font-size:20px;letter-spacing:-0.40px;color:#111;">164.7 Hz</div>
<div class="badge" style="left:1733px;top:265px;width:182px;height:80px;"><div class="h" style="height:26px;background:#41526e"></div><div class="chip" style="left:136px;top:3px;width:35px;height:20px;"></div></div>
<div class="t" style="top:266px;left:1740.8px;font-size:20px;letter-spacing:2.10px;color:#d8e0ee;"><span class="c" style="margin-right:-0.12em">测量</span> 2</div>
<div class="t" style="top:266.5px;left:1881.0px;font-size:20.67px;color:#111;text-shadow:0.4px 0 0 #111;">4</div>
<div class="t" style="top:291px;left:1745.0px;font-size:20.19px;color:#111;"><span class="c" style="margin-right:-0.18em">均方根</span></div>
<div class="t" style="top:316px;left:1744.3px;font-size:20px;letter-spacing:0.77px;color:#111;">958.0 mA</div>
<div class="badge" style="left:1733px;top:352px;width:182px;height:80px;"><div class="h" style="height:26px;background:#41526e"></div><div class="chip" style="left:136px;top:3px;width:35px;height:20px;"></div></div>
<div class="t" style="top:353px;left:1740.8px;font-size:20px;letter-spacing:0.50px;color:#d8e0ee;"><span class="c" style="margin-right:-0.12em">测量</span> 3</div>
<div class="t" style="top:353.5px;left:1881.0px;font-size:20.67px;color:#111;text-shadow:0.4px 0 0 #111;">4</div>
<div class="t" style="top:378px;left:1745.0px;font-size:20.22px;color:#111;"><span class="c" style="margin-right:-0.12em">最大</span></div>
<div class="t" style="top:403px;left:1743.3px;font-size:20px;letter-spacing:-0.63px;color:#111;">1.514 A</div>
<div class="badge" style="left:1733px;top:439px;width:182px;height:80px;"><div class="h" style="height:26px;background:#41526e"></div><div class="chip" style="left:136px;top:3px;width:35px;height:20px;"></div></div>
<div class="t" style="top:440px;left:1740.8px;font-size:20px;letter-spacing:2.40px;color:#d8e0ee;"><span class="c" style="margin-right:-0.12em">测量</span> 4</div>
<div class="t" style="top:440.5px;left:1881.0px;font-size:20.67px;color:#111;text-shadow:0.4px 0 0 #111;">4</div>
<div class="t" style="top:465px;left:1745.0px;font-size:20.22px;color:#111;"><span class="c" style="margin-right:-0.12em">最小</span></div>
<div class="t" style="top:490px;left:1744.3px;font-size:20px;letter-spacing:-0.33px;color:#111;">-1.481 A</div>
<div class="a" style="left:1709px;top:492px;width:7px;height:7px;border-radius:2px;background:#c3d2f5;"></div>
<div class="a" style="left:1709px;top:504px;width:7px;height:7px;border-radius:2px;background:#c3d2f5;"></div>
<div class="a" style="left:1709px;top:516px;width:7px;height:7px;border-radius:2px;background:#c3d2f5;"></div>
<div class="badge" style="left:5px;top:972px;width:134px;height:103.5px;"><div class="h" style="height:26.5px;background:#dc5f91"></div></div>
<svg style="left:10px;top:1024px" width="32" height="24" viewBox="10 1024 32 24"><path d="M18.4,1036.6 C18.6,1031.6 21.5,1029.6 25.3,1029.6 C29.2,1029.6 32,1031.8 32.3,1036.6" fill="none" stroke="#111" stroke-width="1.7"/><circle cx="25.3" cy="1033.9" r="2.9" fill="none" stroke="#111" stroke-width="1.4"/><path d="M16.8,1036.5 H20.2 V1040.6 L18.5,1042.6 L16.8,1040.6 Z" fill="#eef0fa" stroke="#111" stroke-width="1.3" stroke-linejoin="round"/><rect x="29.9" y="1036.7" width="4.5" height="6.6" rx="0.8" fill="#eef0fa" stroke="#111" stroke-width="1.4"/></svg>
<div class="t" style="top:973.5px;left:12.6px;font-size:18.7px;letter-spacing:0.33px;color:#111;">Ch 3</div>
<div class="t" style="top:999px;left:16.3px;font-size:20px;letter-spacing:1.24px;color:#111;">20.0 V/<span class="c" style="margin-right:-0.06em">格</span></div>
<div class="t" style="top:1047px;left:16.4px;font-size:20px;letter-spacing:0.58px;color:#111;">200 MHz</div>
<div class="badge" style="left:146px;top:972px;width:134px;height:103.5px;"><div class="h" style="height:26.5px;background:#525a52"></div></div>
<div class="t" style="top:973.5px;left:153.5px;font-size:18.7px;letter-spacing:0.83px;color:#96d200;">Ch 4</div>
<div class="t" style="top:999px;left:155.3px;font-size:20px;letter-spacing:1.14px;color:#111;">1.00 A/<span class="c" style="margin-right:-0.06em">格</span></div>
<div class="t" style="top:1023px;left:155.3px;font-size:20px;letter-spacing:0.13px;color:#111;">1 MΩ</div>
<div class="t" style="top:1047px;left:157.3px;font-size:20px;letter-spacing:0.62px;color:#111;">200 MHz</div>
<div class="btn" style="left:1039px;top:972px;width:60px;height:103.5px;border-radius:9px;"><div class="a" style="left:8px;top:11px;width:42px;height:3px;background:#c8b832;"></div></div>
<div class="t" style="top:1011.5px;left:1066.7px;font-size:18.00px;color:#e4e6ec;">1</div>
<div class="btn" style="left:1106px;top:972px;width:60px;height:103.5px;border-radius:9px;"><div class="a" style="left:8px;top:11px;width:42px;height:3px;background:#1ec8e6;"></div></div>
<div class="t" style="top:1011.5px;left:1132.4px;font-size:21.11px;color:#e4e6ec;">2</div>
<div class="btn" style="left:1173px;top:972px;width:60px;height:103.5px;border-radius:10px;"></div>
<div class="t" style="top:986px;left:1185.2px;font-size:20.17px;color:#e4e6ec;"><span class="c" style="margin-right:-0.12em">数学</span></div>
<div class="t" style="top:1010.5px;left:1185.2px;font-size:20.17px;color:#e4e6ec;"><span class="c" style="margin-right:-0.12em">参考</span></div>
<div class="t" style="top:1035px;left:1185.2px;font-size:20.17px;color:#e4e6ec;"><span class="c" style="margin-right:-0.12em">总线</span></div>
<div class="badge" style="left:1245px;top:972px;width:144px;height:103.5px;"><div class="h" style="height:26px;background:#41526e"></div></div>
<div class="t" style="top:973px;left:1253.5px;font-size:20.44px;color:#d8e0ee;"><span class="c" style="margin-right:-0.12em">水平</span></div>
<div class="t" style="top:999px;left:1256.5px;font-size:20px;letter-spacing:0.79px;color:#111;">2.00 s/<span class="c" style="margin-right:-0.06em">格</span></div>
<div class="t" style="top:1023px;left:1256.0px;font-size:20px;letter-spacing:0.03px;color:#111;">SR: 500 k<span class="c" style="margin-right:-0.06em">次</span>/<span class="c" style="margin-right:-0.06em">秒</span></div>
<div class="t" style="top:1047px;left:1254.3px;font-size:20px;letter-spacing:-0.13px;color:#111;">RL: 10 Mpts</div>
<div class="badge" style="left:1401px;top:972px;width:144px;height:103.5px;"><div class="h" style="height:26px;background:#41526e"></div><div class="chip" style="left:97.5px;top:3px;width:35px;height:20px;"></div><svg style="left:10px;top:31px" width="26" height="18" viewBox="0 0 26 18"><path d="M1.5,2.5 H6 L16.5,15.5 H23.5" fill="none" stroke="#111" stroke-width="1.8"/></svg></div>
<div class="t" style="top:973px;left:1409.4px;font-size:20.61px;color:#d8e0ee;"><span class="c" style="margin-right:-0.12em">触发</span></div>
<div class="t" style="top:973.5px;left:1511.0px;font-size:20.67px;color:#111;text-shadow:0.4px 0 0 #111;">4</div>
<div class="t" style="top:999px;left:1472.6px;font-size:20px;letter-spacing:0.90px;color:#111;">2.58 A</div>
<div class="badge" style="left:1557px;top:972px;width:144px;height:103.5px;"><div class="h" style="height:26px;background:#41526e"></div></div>
<div class="t" style="top:973px;left:1564.6px;font-size:20.61px;color:#d8e0ee;"><span class="c" style="margin-right:-0.12em">采集</span></div>
<div class="t" style="top:998px;left:1567.4px;font-size:20.44px;color:#111;"><span class="c" style="margin-right:-0.24em">高分辨率</span></div>
<div class="t" style="top:1023px;left:1567.0px;font-size:20px;letter-spacing:0.30px;color:#111;">1 Acqs</div>
<div class="btn" style="left:1713px;top:972px;width:60px;height:103.5px;border-radius:9px;"><div class="a" style="left:8px;top:11px;width:42px;height:3px;background:#f07820;"></div></div>
<div class="t" style="top:1011.5px;left:1731.8px;font-size:19.5px;letter-spacing:-1.60px;color:#e4e6ec;">RF</div>
<div class="a" style="left:1785px;top:972px;width:130px;height:48.5px;border-radius:9px;background:#c8373c;border:1px solid #77554e;"></div>
<div class="t" style="top:984px;left:1831.8px;font-size:20.86px;color:#f7dede;"><span class="c" style="margin-right:-0.12em">预览</span></div>
<div class="a" style="left:1785px;top:1027px;width:130px;height:48.5px;border-radius:9px;background:#a0b0d2;border:1px solid #77776e;"></div>
<div class="t" style="top:1026.5px;left:1797.6px;font-size:20px;letter-spacing:-1.12px;color:#111;">11 11<span class="c" style="margin-right:-0.06em">月</span> 2022</div>
<div class="t" style="top:1050.5px;left:1816.7px;font-size:20px;letter-spacing:-1.33px;color:#111;">11:17:48</div>
</body></html>
